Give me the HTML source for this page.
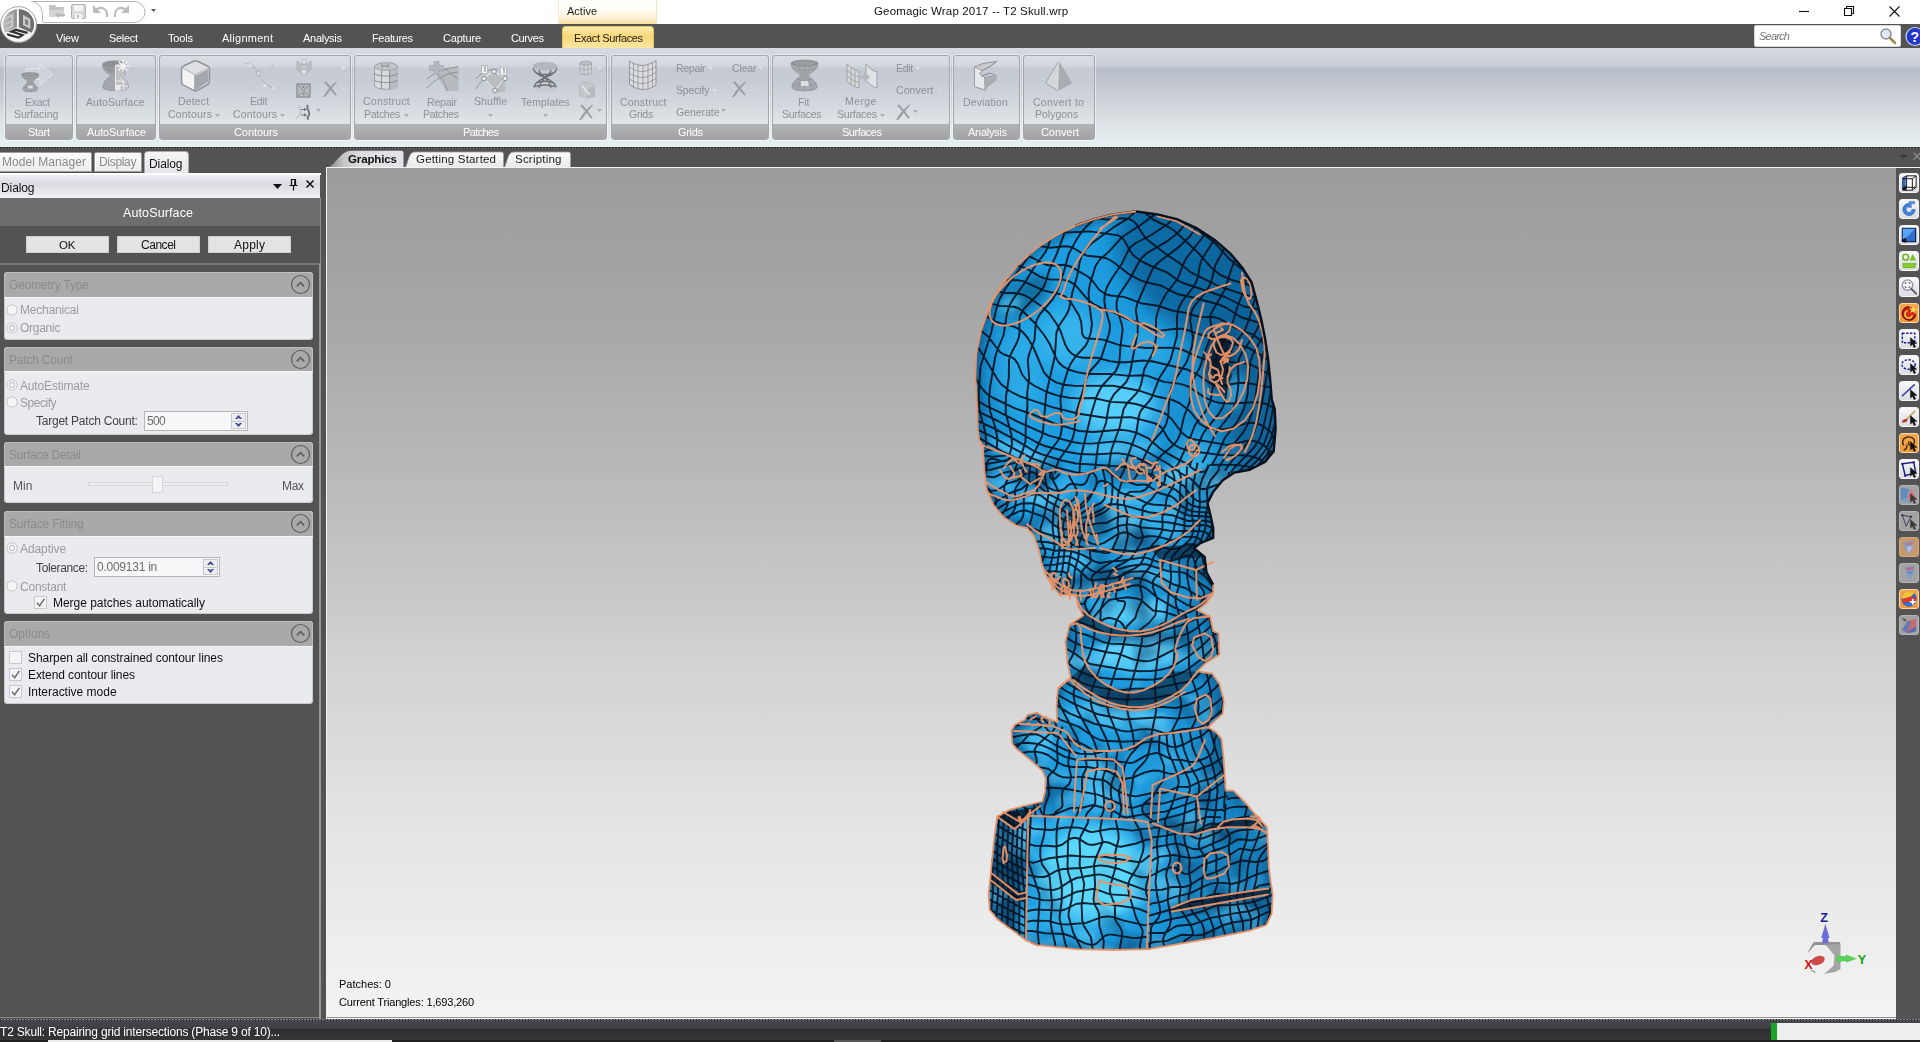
<!DOCTYPE html>
<html>
<head>
<meta charset="utf-8">
<title>Geomagic Wrap 2017 -- T2 Skull.wrp</title>
<style>
*{box-sizing:border-box;margin:0;padding:0}
html,body{width:1920px;height:1042px;overflow:hidden;background:#535353;font-family:"Liberation Sans",sans-serif;font-size:11px;color:#000}
.abs{position:absolute}
.t{position:absolute;white-space:nowrap;will-change:transform}
svg{position:absolute;overflow:visible}

</style>
</head>
<body>
<div class="abs" style="left:0px;top:0px;width:1920px;height:24px;background:#fff"></div>
<div class="abs" style="left:558px;top:0px;width:99px;height:24px;background:linear-gradient(#ffffff,#fffdf6 40%,#fdf1d2 75%,#f9dfa0);border-left:1px solid #f0e9d8;border-right:1px solid #f0e9d8"></div>
<div class="t" style="left:566.5px;top:4px;font-size:11px;line-height:14px;color:#222;letter-spacing:0.01px;">Active</div>
<div class="t" style="left:873.5px;top:4px;font-size:11.5px;line-height:14px;color:#111;letter-spacing:0.16px;">Geomagic Wrap 2017 -- T2 Skull.wrp</div>
<svg style="left:1790px;top:0" width="130" height="24" viewBox="0 0 130 24"><g stroke="#111" stroke-width="1.1" fill="none"><path d="M9 11.5h10"/><path d="M54.5 8.5h7v7h-7z"/><path d="M56.5 8.500v-2h7v7h-2"/><path d="M99.500 6.500l10 10M109.500 6.500l-10 10"/></g></svg>
<div class="abs" style="left:0px;top:24px;width:1920px;height:24px;background:#535353"></div>
<svg style="left:28px;top:0" width="140" height="26" viewBox="0 0 140 26"><path d="M3.700 1.500H106.500a10.500 10.500 0 0 1 0 21H16.500Q14.500 22.500 14.500 20.500V15C14.500 7 9 1.500 3.700 1.500z" fill="#fff" stroke="#b5b5b5" stroke-width="1"/>
<g><path d="M21 5h6l2 2h7v3h-15z" fill="#c4c4c4"/><rect x="21" y="10" width="15" height="7" fill="#d4d4d4"/><path d="M27 15l4-3v2h6v2h-6v2z" fill="#b8b8b8"/></g>
<g><rect x="43.500" y="4.500" width="14" height="14" rx="1.500" fill="#d9d9d9" stroke="#b0b0b0"/><rect x="46" y="5" width="9" height="6" fill="#f4f4f4"/><rect x="47" y="14" width="7" height="5" fill="#f4f4f4"/><rect x="49" y="15" width="2" height="3" fill="#b8b8b8"/></g>
<g fill="none" stroke="#bdbdbd" stroke-width="2.200"><path d="M68 10c5-4 12-2 11 7"/><path d="M98 10c-5-4-12-2-11 7"/></g><path d="M65 5v8h8z" fill="#bdbdbd"/><path d="M101 5v8h-8z" fill="#bdbdbd"/>
<path d="M123 9h5l-2.500 3z" fill="#555"/></svg>
<div class="t" style="left:55.5px;top:31px;font-size:11px;line-height:14px;color:#fff;letter-spacing:-0.23px;">View</div>
<div class="t" style="left:108.5px;top:31px;font-size:11px;line-height:14px;color:#fff;letter-spacing:-0.31px;">Select</div>
<div class="t" style="left:167.5px;top:31px;font-size:11px;line-height:14px;color:#fff;letter-spacing:-0.17px;">Tools</div>
<div class="t" style="left:221.5px;top:31px;font-size:11px;line-height:14px;color:#fff;letter-spacing:0.26px;">Alignment</div>
<div class="t" style="left:302.5px;top:31px;font-size:11px;line-height:14px;color:#fff;letter-spacing:-0.28px;">Analysis</div>
<div class="t" style="left:371.5px;top:31px;font-size:11px;line-height:14px;color:#fff;letter-spacing:-0.35px;">Features</div>
<div class="t" style="left:442.5px;top:31px;font-size:11px;line-height:14px;color:#fff;letter-spacing:-0.19px;">Capture</div>
<div class="t" style="left:510.5px;top:31px;font-size:11px;line-height:14px;color:#fff;letter-spacing:-0.38px;">Curves</div>
<div class="abs" style="left:562px;top:26px;width:92px;height:22px;border-radius:4px 4px 0 0;background:linear-gradient(#fcecb0,#f8d778 45%,#fbe6a2);border:1px solid #eac45e;border-bottom:none"></div>
<div class="t" style="left:573.5px;top:31px;font-size:11px;line-height:14px;color:#222;letter-spacing:-0.38px;">Exact Surfaces</div>
<div class="abs" style="left:1754px;top:25px;width:147px;height:22px;background:#fff;border:1px solid #d8d8d8;border-radius:2px"></div>
<div class="t" style="left:1758.5px;top:29px;font-size:11px;line-height:14px;color:#777;letter-spacing:-0.78px;font-style:italic;">Search</div>
<svg style="left:1878px;top:27px" width="20" height="18" viewBox="0 0 20 18"><circle cx="8" cy="7" r="5" fill="#dfeaf5" stroke="#8a9099" stroke-width="1.500"/><path d="M12 11l5 5" stroke="#a08a4a" stroke-width="2.500" stroke-linecap="round"/></svg>
<svg style="left:1905px;top:27px" width="15" height="20" viewBox="0 0 15 20"><circle cx="10" cy="9.500" r="9" fill="#2338c9" stroke="#cfd6ff" stroke-width="1.200"/><text x="5.500" y="14.500" font-family="Liberation Sans" font-weight="bold" font-size="14" fill="#fff">?</text></svg>
<svg style="left:0;top:5px" width="40" height="40" viewBox="0 0 40 40"><defs><radialGradient id="lg" cx="45%" cy="40%" r="60%"><stop offset="0" stop-color="#ffffff"/><stop offset=".8" stop-color="#ececec"/><stop offset="1" stop-color="#c4c4c4"/></radialGradient><clipPath id="lgc"><circle cx="18.600" cy="19.600" r="15.600"/></clipPath><linearGradient id="lgl" x1="0" y1="0" x2="1" y2="0"><stop offset="0" stop-color="#c9c9c9"/><stop offset="1" stop-color="#8f8f8f"/></linearGradient></defs>
<circle cx="18.600" cy="19.600" r="18" fill="url(#lg)" stroke="#9d9d9d" stroke-width=".9"/>
<g clip-path="url(#lgc)"><path d="M16.900 0V22.200L0 30V0z" fill="url(#lgl)"/><path d="M18.900 0V22.200L40 31V0z" fill="#707070"/><path d="M17.900 24L40 33V40H0V32z" fill="#f6f6f6"/>
<path d="M5 13.800L12.300 10.300V21.300L4.800 24.800M5.500 19.200L12.300 16" fill="none" stroke="#c6c6c6" stroke-width="2.300"/>
<path d="M23 9.800L30.300 14V23.800L23 20.200z" fill="#c9c9c9"/><path d="M25.200 13.800L28 15.400V20.400L25.200 19z" fill="#7c7c7c"/>
<path d="M27.500 27.800L16 24.800L11.500 26.600L22.500 30L18.500 32.600L7 29.300" fill="none" stroke="#333" stroke-width="2.300" stroke-linejoin="miter"/></g>
<circle cx="18.600" cy="19.600" r="16.300" fill="none" stroke="#fff" stroke-width="1.400" opacity=".9"/></svg><div class="abs" style="left:0px;top:48px;width:1920px;height:99px;background:linear-gradient(#d8dae0 0px,#d3d6dc 6px,#c9cdd5 18px,#b9bfca 20.5px,#bcc2cc 28px,#cdd2d8 52px,#dde3e6 76px,#e6f0f3 99px)"></div>
<div class="abs" style="left:0px;top:147px;width:1920px;height:1px;background:repeating-linear-gradient(90deg,#262626 0 2px,#6e6e6e 2px 3px)"></div>
<div class="abs" style="left:4px;top:54px;width:70px;height:87px;border-radius:4px;border:1px solid rgba(255,255,255,.55)"></div><div class="abs" style="left:5px;top:55px;width:68px;height:85px;border:1px solid #a3a5a8;border-radius:3px;background:linear-gradient(rgba(255,255,255,.22),rgba(255,255,255,.10) 40%,rgba(255,255,255,.04));overflow:hidden"><div class="abs" style="left:0;right:0;bottom:0;height:15px;background:linear-gradient(#b2b4b5,#a0a2a3)"></div></div><div class="t" style="left:28.0px;top:125px;font-size:11px;line-height:14px;color:#fff;letter-spacing:-0.31px;">Start</div>
<div class="abs" style="left:75px;top:54px;width:82px;height:87px;border-radius:4px;border:1px solid rgba(255,255,255,.55)"></div><div class="abs" style="left:76px;top:55px;width:80px;height:85px;border:1px solid #a3a5a8;border-radius:3px;background:linear-gradient(rgba(255,255,255,.22),rgba(255,255,255,.10) 40%,rgba(255,255,255,.04));overflow:hidden"><div class="abs" style="left:0;right:0;bottom:0;height:15px;background:linear-gradient(#b2b4b5,#a0a2a3)"></div></div><div class="t" style="left:87.0px;top:125px;font-size:11px;line-height:14px;color:#fff;letter-spacing:-0.16px;">AutoSurface</div>
<div class="abs" style="left:158px;top:54px;width:194px;height:87px;border-radius:4px;border:1px solid rgba(255,255,255,.55)"></div><div class="abs" style="left:159px;top:55px;width:192px;height:85px;border:1px solid #a3a5a8;border-radius:3px;background:linear-gradient(rgba(255,255,255,.22),rgba(255,255,255,.10) 40%,rgba(255,255,255,.04));overflow:hidden"><div class="abs" style="left:0;right:0;bottom:0;height:15px;background:linear-gradient(#b2b4b5,#a0a2a3)"></div></div><div class="t" style="left:233.5px;top:125px;font-size:11px;line-height:14px;color:#fff;letter-spacing:-0.09px;">Contours</div>
<div class="abs" style="left:353px;top:54px;width:255px;height:87px;border-radius:4px;border:1px solid rgba(255,255,255,.55)"></div><div class="abs" style="left:354px;top:55px;width:253px;height:85px;border:1px solid #a3a5a8;border-radius:3px;background:linear-gradient(rgba(255,255,255,.22),rgba(255,255,255,.10) 40%,rgba(255,255,255,.04));overflow:hidden"><div class="abs" style="left:0;right:0;bottom:0;height:15px;background:linear-gradient(#b2b4b5,#a0a2a3)"></div></div><div class="t" style="left:463.0px;top:125px;font-size:11px;line-height:14px;color:#fff;letter-spacing:-0.62px;">Patches</div>
<div class="abs" style="left:610px;top:54px;width:160px;height:87px;border-radius:4px;border:1px solid rgba(255,255,255,.55)"></div><div class="abs" style="left:611px;top:55px;width:158px;height:85px;border:1px solid #a3a5a8;border-radius:3px;background:linear-gradient(rgba(255,255,255,.22),rgba(255,255,255,.10) 40%,rgba(255,255,255,.04));overflow:hidden"><div class="abs" style="left:0;right:0;bottom:0;height:15px;background:linear-gradient(#b2b4b5,#a0a2a3)"></div></div><div class="t" style="left:677.5px;top:125px;font-size:11px;line-height:14px;color:#fff;letter-spacing:-0.33px;">Grids</div>
<div class="abs" style="left:771px;top:54px;width:180px;height:87px;border-radius:4px;border:1px solid rgba(255,255,255,.55)"></div><div class="abs" style="left:772px;top:55px;width:178px;height:85px;border:1px solid #a3a5a8;border-radius:3px;background:linear-gradient(rgba(255,255,255,.22),rgba(255,255,255,.10) 40%,rgba(255,255,255,.04));overflow:hidden"><div class="abs" style="left:0;right:0;bottom:0;height:15px;background:linear-gradient(#b2b4b5,#a0a2a3)"></div></div><div class="t" style="left:841.5px;top:125px;font-size:11px;line-height:14px;color:#fff;letter-spacing:-0.49px;">Surfaces</div>
<div class="abs" style="left:952px;top:54px;width:69px;height:87px;border-radius:4px;border:1px solid rgba(255,255,255,.55)"></div><div class="abs" style="left:953px;top:55px;width:67px;height:85px;border:1px solid #a3a5a8;border-radius:3px;background:linear-gradient(rgba(255,255,255,.22),rgba(255,255,255,.10) 40%,rgba(255,255,255,.04));overflow:hidden"><div class="abs" style="left:0;right:0;bottom:0;height:15px;background:linear-gradient(#b2b4b5,#a0a2a3)"></div></div><div class="t" style="left:967.5px;top:125px;font-size:11px;line-height:14px;color:#fff;letter-spacing:-0.28px;">Analysis</div>
<div class="abs" style="left:1022px;top:54px;width:74px;height:87px;border-radius:4px;border:1px solid rgba(255,255,255,.55)"></div><div class="abs" style="left:1023px;top:55px;width:72px;height:85px;border:1px solid #a3a5a8;border-radius:3px;background:linear-gradient(rgba(255,255,255,.22),rgba(255,255,255,.10) 40%,rgba(255,255,255,.04));overflow:hidden"><div class="abs" style="left:0;right:0;bottom:0;height:15px;background:linear-gradient(#b2b4b5,#a0a2a3)"></div></div><div class="t" style="left:1040.5px;top:125px;font-size:11px;line-height:14px;color:#fff;letter-spacing:-0.08px;">Convert</div>
<div class="t" style="left:25.1px;top:96px;font-size:10.5px;line-height:13px;color:#8d9095;letter-spacing:-0.31px;">Exact</div>
<div class="t" style="left:13.9px;top:108px;font-size:10.5px;line-height:13px;color:#8d9095;letter-spacing:0.00px;">Surfacing</div>
<div class="t" style="left:85.8px;top:96px;font-size:10.5px;line-height:13px;color:#8d9095;letter-spacing:0.09px;">AutoSurface</div>
<div class="t" style="left:178.3px;top:95px;font-size:10.5px;line-height:13px;color:#8d9095;letter-spacing:0.16px;">Detect</div>
<div class="t" style="left:167.5px;top:108px;font-size:10.5px;line-height:13px;color:#8d9095;letter-spacing:0.20px;">Contours</div>
<svg style="left:215px;top:114px" width="6" height="4" viewBox="0 0 6 4"><path d="M0 0h5l-2.500 3z" fill="#a9acb0"/></svg>
<div class="t" style="left:250.1px;top:95px;font-size:10.5px;line-height:13px;color:#8d9095;letter-spacing:-0.24px;">Edit</div>
<div class="t" style="left:232.5px;top:108px;font-size:10.5px;line-height:13px;color:#8d9095;letter-spacing:0.20px;">Contours</div>
<svg style="left:280px;top:114px" width="6" height="4" viewBox="0 0 6 4"><path d="M0 0h5l-2.500 3z" fill="#a9acb0"/></svg>
<div class="t" style="left:362.5px;top:95px;font-size:10.5px;line-height:13px;color:#8d9095;letter-spacing:0.23px;">Construct</div>
<div class="t" style="left:363.9px;top:108px;font-size:10.5px;line-height:13px;color:#8d9095;letter-spacing:-0.29px;">Patches</div>
<svg style="left:404px;top:114px" width="6" height="4" viewBox="0 0 6 4"><path d="M0 0h5l-2.500 3z" fill="#a9acb0"/></svg>
<div class="t" style="left:427.3px;top:96px;font-size:10.5px;line-height:13px;color:#8d9095;letter-spacing:-0.19px;">Repair</div>
<div class="t" style="left:423.3px;top:108px;font-size:10.5px;line-height:13px;color:#8d9095;letter-spacing:-0.32px;">Patches</div>
<div class="t" style="left:473.5px;top:95px;font-size:10.5px;line-height:13px;color:#8d9095;letter-spacing:0.08px;">Shuffle</div>
<svg style="left:488px;top:114px" width="6" height="4" viewBox="0 0 6 4"><path d="M0 0h5l-2.500 3z" fill="#a9acb0"/></svg>
<div class="t" style="left:520.5px;top:96px;font-size:10.5px;line-height:13px;color:#8d9095;letter-spacing:0.09px;">Templates</div>
<svg style="left:543px;top:114px" width="6" height="4" viewBox="0 0 6 4"><path d="M0 0h5l-2.500 3z" fill="#a9acb0"/></svg>
<div class="t" style="left:619.5px;top:96px;font-size:10.5px;line-height:13px;color:#8d9095;letter-spacing:0.20px;">Construct</div>
<div class="t" style="left:629.3px;top:108px;font-size:10.5px;line-height:13px;color:#8d9095;letter-spacing:-0.22px;">Grids</div>
<div class="t" style="left:676.0px;top:62px;font-size:10.5px;line-height:13px;color:#8d9095;letter-spacing:-0.29px;">Repair</div>
<svg style="left:708px;top:67px" width="6" height="4" viewBox="0 0 6 4"><path d="M0 0h5l-2.500 3z" fill="#dfe2e6"/></svg>
<div class="t" style="left:676.0px;top:84px;font-size:10.5px;line-height:13px;color:#8d9095;letter-spacing:-0.16px;">Specify</div>
<svg style="left:712px;top:89px" width="6" height="4" viewBox="0 0 6 4"><path d="M0 0h5l-2.500 3z" fill="#dfe2e6"/></svg>
<div class="t" style="left:676.0px;top:106px;font-size:10.5px;line-height:13px;color:#8d9095;letter-spacing:-0.04px;">Generate</div>
<svg style="left:721px;top:109px" width="6" height="4" viewBox="0 0 6 4"><path d="M0 0h5l-2.500 3z" fill="#a9acb0"/></svg>
<div class="t" style="left:731.5px;top:62px;font-size:10.5px;line-height:13px;color:#8d9095;letter-spacing:-0.14px;">Clear</div>
<svg style="left:758px;top:67px" width="6" height="4" viewBox="0 0 6 4"><path d="M0 0h5l-2.500 3z" fill="#dfe2e6"/></svg>
<svg style="left:750px;top:89px" width="6" height="4" viewBox="0 0 6 4"><path d="M0 0h5l-2.500 3z" fill="#d4d7dc"/></svg>
<div class="t" style="left:797.5px;top:96px;font-size:10.5px;line-height:13px;color:#8d9095;letter-spacing:-0.14px;">Fit</div>
<div class="t" style="left:782.0px;top:108px;font-size:10.5px;line-height:13px;color:#8d9095;letter-spacing:-0.28px;">Surfaces</div>
<div class="t" style="left:845.1px;top:95px;font-size:10.5px;line-height:13px;color:#8d9095;letter-spacing:0.41px;">Merge</div>
<div class="t" style="left:836.5px;top:108px;font-size:10.5px;line-height:13px;color:#8d9095;letter-spacing:-0.21px;">Surfaces</div>
<svg style="left:880px;top:114px" width="6" height="4" viewBox="0 0 6 4"><path d="M0 0h5l-2.500 3z" fill="#a9acb0"/></svg>
<div class="t" style="left:896.1px;top:62px;font-size:10.5px;line-height:13px;color:#8d9095;letter-spacing:-0.31px;">Edit</div>
<svg style="left:915px;top:67px" width="6" height="4" viewBox="0 0 6 4"><path d="M0 0h5l-2.500 3z" fill="#dfe2e6"/></svg>
<div class="t" style="left:896.1px;top:84px;font-size:10.5px;line-height:13px;color:#8d9095;letter-spacing:0.08px;">Convert</div>
<svg style="left:938px;top:88px" width="6" height="4" viewBox="0 0 6 4"><path d="M0 0h5l-2.500 3z" fill="#d4d7dc"/></svg>
<svg style="left:913px;top:110px" width="6" height="4" viewBox="0 0 6 4"><path d="M0 0h5l-2.500 3z" fill="#a9acb0"/></svg>
<div class="t" style="left:963.3px;top:96px;font-size:10.5px;line-height:13px;color:#8d9095;letter-spacing:0.12px;">Deviation</div>
<div class="t" style="left:1032.5px;top:96px;font-size:10.5px;line-height:13px;color:#8d9095;letter-spacing:0.28px;">Convert to</div>
<div class="t" style="left:1035.1px;top:108px;font-size:10.5px;line-height:13px;color:#8d9095;letter-spacing:0.00px;">Polygons</div>
<svg style="left:341px;top:67px" width="6" height="4" viewBox="0 0 6 4"><path d="M0 0h5l-2.500 3z" fill="#dfe2e6"/></svg>
<svg style="left:341px;top:88px" width="6" height="4" viewBox="0 0 6 4"><path d="M0 0h5l-2.500 3z" fill="#d4d7dc"/></svg>
<svg style="left:316px;top:109px" width="6" height="4" viewBox="0 0 6 4"><path d="M0 0h5l-2.500 3z" fill="#a9acb0"/></svg>
<svg style="left:597px;top:67px" width="6" height="4" viewBox="0 0 6 4"><path d="M0 0h5l-2.500 3z" fill="#dfe2e6"/></svg>
<svg style="left:597px;top:109px" width="6" height="4" viewBox="0 0 6 4"><path d="M0 0h5l-2.500 3z" fill="#a9acb0"/></svg><svg style="left:21px;top:62px" width="33" height="31" viewBox="0 0 33 31"><path d="M5 6.500h14V2l12.500 10.500L19 22.500v-5H5z" fill="#cfd3da" stroke="#e6e8ec" stroke-width="1" opacity=".95"/><g transform="translate(1 10.500)"><path d="M0 1.9000000000000001C0 6.84 5.609999999999999 6.5 5.609999999999999 9.5C5.609999999999999 12.5 1 12.540000000000001 1 16.72C1 20 15.5 20 15.5 16.72C15.5 12.540000000000001 10.89 12.5 10.89 9.5C10.89 6.5 16.5 6.84 16.5 1.9000000000000001z" fill="#a6a9ad" stroke="#8d9094" stroke-width=".8"/><ellipse cx="8.25" cy="1.9000000000000001" rx="8.25" ry="1.9000000000000001" fill="#8d9094" stroke="#8d9094" stroke-width=".6"/><ellipse cx="8.25" cy="1.9000000000000001" rx="6.6000000000000005" ry="1.1400000000000001" fill="#a6a9ad" opacity=".6"/><g fill="none" stroke="#8d9094" stroke-width=".7" opacity=".9"><path d="M8.25 3.8000000000000003V19M4.62 3.8000000000000003C4.949999999999999 5.7 6.93 7.5 6.93 9.5C6.93 12.5 4.125 13.299999999999999 4.125 19M11.879999999999999 3.8000000000000003C11.55 5.7 9.57 7.5 9.57 9.5C9.57 12.5 12.375 13.299999999999999 12.375 19"/><path d="M0.99 5.130000000000001Q8.25 7.6000000000000005 15.51 5.130000000000001M3.3000000000000003 11.78Q8.25 13.299999999999999 13.200000000000001 11.78M0.99 14.82Q8.25 16.72 15.51 14.82"/></g><path d="M6.27 12.920000000000002L10.56 12.920000000000002L10.89 15.959999999999999L5.9399999999999995 15.959999999999999z" fill="#f2f2f3" opacity=".75"/></g></svg>
<svg style="left:102px;top:60px" width="28" height="32" viewBox="0 0 28 32"><path d="M0.500 4C0.500 12 8 14 9 15.500C8 17 1 20 1 27.500C1 31.500 26.500 31.500 26.500 27.500C26.500 20 19 17 18.500 15.500C19 14 24.500 12 24.500 4z" fill="#a3a6aa" stroke="#8d9094" stroke-width=".8"/><ellipse cx="12.500" cy="4" rx="12" ry="3.500" fill="#8d9094"/><path d="M1 5C3 11 8 13 12.500 13.500V7.500C8 7.500 3 7 1 5z" fill="#96999d"/><path d="M13.500 4V30.500C20 30.500 26.500 30 26.500 27.500C26.500 20 19 17 18.500 15.500C19 14 24.500 12 24.500 4z" fill="#c3c5c8" opacity=".85"/><g fill="none" stroke="#f0f0f1" stroke-width=".9"><path d="M13.500 5V30.500M18.500 17C21 20 22 26 21.500 30M14 21Q20 20.500 24 22M14 25.500Q21 25 26 26.500"/></g><path d="M14 25.500h4.500v5H14z" fill="#ededee" opacity=".9"/><g stroke="#f4f4f5" stroke-width="1.700" stroke-linecap="round"><path d="M21 0.500V11.500M15.500 6H26.500M17 2L25 10M25 2L17 10"/></g><path d="M21 11c2 1 3 3 1 5" fill="none" stroke="#8d9094" stroke-width=".8"/></svg>
<svg style="left:181px;top:60px" width="29" height="32" viewBox="0 0 29 32"><path d="M12.500 1.200Q14.500 .3 16.500 1.200L26.500 6Q28.500 7 28.500 9.500V21.500Q28.500 23.500 26.500 24.500L16 30.500Q14.500 31.300 13 30.500L2 24.500Q.5 23.500 .5 21.500V9.500Q.5 7 2.500 6z" fill="#dfe0e3" stroke="#909397" stroke-width="1.500"/><path d="M1.500 9L13.500 15.500V30L2 24z" fill="#f3f3f4"/><path d="M14.500 15.500L27.500 9V21.500L14.500 30z" fill="#a4a7ab"/><path d="M2 8L14 14.500L27 8" fill="none" stroke="#b9bbbe" stroke-width="1"/><path d="M14 14.500V30.500" stroke="#909397" stroke-width="1.200"/></svg>
<svg style="left:244px;top:62px" width="32" height="30" viewBox="0 0 32 30"><g fill="none" stroke="#b9bdc3" stroke-width="1.400" stroke-linecap="round"><path d="M2 1.500C10 2 13 8 15 13S22 24 30 26"/><path d="M29 3.500L6 28"/><path d="M27 5.500L5 29" stroke="#c9ccd1"/></g><g fill="#d8dadd" stroke="#b0b4ba" stroke-width="1"><circle cx="14.500" cy="11.500" r="2.300"/></g><g fill="#e6e7ea"><circle cx="6" cy="3.500" r="1.500"/><circle cx="21" cy="23.500" r="1.500"/><circle cx="29.500" cy="26" r="1.300"/></g></svg>
<svg style="left:296px;top:60px" width="16" height="15" viewBox="0 0 16 15"><path d="M1 1l3 3h8l3-3v8l-4 3H5L1 9z" fill="#c3c6ca" stroke="#a2a5a9" stroke-width=".8"/><path d="M6 0h4v4H6zM5 10h6l-1 4H6z" fill="#e6e7e9" stroke="#a2a5a9" stroke-width=".6"/><path d="M4 4v6M12 4v6" stroke="#a2a5a9" stroke-width=".7"/></svg>
<svg style="left:296px;top:83px" width="15" height="15" viewBox="0 0 15 15"><rect x="1" y="1" width="13" height="13" fill="#b7babe" stroke="#8f9296" stroke-width="1.400"/><path d="M1.500 1.500l12 12M13.500 1.500l-12 12" stroke="#8f9296" stroke-width="1"/><path d="M6 3.500h3l-1.500 1.500zM6 11.500h3l-1.500-1.500z" fill="#6d7074"/></svg>
<svg style="left:296px;top:104px" width="17" height="16" viewBox="0 0 17 16"><path d="M4 1C1 4 7 7 4 10S1 14 1 15" fill="none" stroke="#c0c3c7" stroke-width="1.600"/><path d="M12 1C9 4 15 8 13 11S11 14 12.500 15.500" fill="none" stroke="#6f7276" stroke-width="1.800"/><path d="M5 5.500h4M5 11h4" stroke="#6f7276" stroke-width="1"/><path d="M8 3.800l3 1.700-3 1.700zM8 9.300l3 1.700-3 1.700z" fill="#6f7276"/></svg>
<svg style="left:323px;top:63px" width="16" height="12" viewBox="0 0 16 12"><path d="M1 5c2-3 3 3 5 0s2-4 4 0 3 1 5-2M4 5v5" fill="none" stroke="#c3c6cb" stroke-width="1" opacity=".9"/></svg>
<svg style="left:323px;top:81px" width="16" height="16" viewBox="0 0 16 16"><path d="M2.500 1.500C6 5 9 9 12.500 13.500" fill="none" stroke="#9c9fa3" stroke-width="2" stroke-linecap="round"/><path d="M13.500 1C9 4.500 4.500 9 1 15.500C2 15.500 3.500 14 5 11.500C7.500 8 10.500 4.500 13.500 1z" fill="#a4a7ab" stroke="#9c9fa3" stroke-width="1.100"/></svg>
<svg style="left:374px;top:62px" width="24" height="29" viewBox="0 0 24 29"><path d="M.5 4.500V23.500C.5 28.500 23.500 28.500 23.500 23.500V4.500z" fill="#d9dadd" stroke="#9a9da1" stroke-width=".9"/><path d="M16 5V27.500C20 27 23.500 26 23.500 23.500V4.500z" fill="#b9bcc0"/><ellipse cx="12" cy="4.500" rx="11.500" ry="3.800" fill="#c2c4c8" stroke="#9a9da1" stroke-width=".9"/><g fill="none" stroke="#85888c" stroke-width=".9"><path d="M7.500 8V27.500M15.500 8V27.500"/><path d="M.5 11.500C4 15 20 15 23.500 11.500M.5 18C4 21.500 20 21.500 23.500 18"/><path d="M8 2v4M14 1.500v4M8 4h7"/></g></svg>
<svg style="left:427px;top:61px" width="32" height="31" viewBox="0 0 32 31"><path d="M8 11L31.500 5V30H19z" fill="#b4b7bb" opacity=".85"/><path d="M0 18C8 12 16 7 31 6M0 27C8 19 18 12 31 11M8 11C14 16 20 24 20 30M18 7C22 12 28 16 31.500 18" fill="none" stroke="#8c8f93" stroke-width=".9"/><path d="M7 .5h5V4.500h4.500V9.500H12V13H7V9.500H2.500V4.500H7z" fill="#b3b6ba" stroke="#a2a5a9" stroke-width=".7"/></svg>
<svg style="left:476px;top:65px" width="32" height="28" viewBox="0 0 32 28"><path d="M9 13L18 6L29 13V27H18.500z" fill="#b7babe" opacity=".9"/><path d="M0 14C5 8 12 4 22 4M0 24C3 19 6 15 9 13" fill="none" stroke="#8c8f93" stroke-width=".9"/><path d="M8 13L18 6.500L29 13L19 25z" fill="none" stroke="#f1f1f2" stroke-width="1"/><g fill="#e9eaec" stroke="#8c8f93" stroke-width="1"><circle cx="8" cy="13.500" r="2.300"/><circle cx="18" cy="6.500" r="2.300"/><circle cx="29" cy="13.500" r="2.300"/><circle cx="19" cy="25.500" r="2.300"/></g><g fill="#f6f6f7" stroke="#9a9da1" stroke-width=".6"><rect x="5.500" y=".5" width="6" height="8"/><rect x="24.500" y="2" width="6" height="8"/></g><path d="M8 2.500l1-1v5.500M27 4l1-1v5.500" fill="none" stroke="#6f7276" stroke-width=".9"/></svg>
<svg style="left:532px;top:62px" width="26" height="30" viewBox="0 0 26 30"><ellipse cx="13" cy="4" rx="12" ry="3.500" fill="#b4b7bb" stroke="#a2a5a9" stroke-width=".6"/><ellipse cx="13" cy="26" rx="11.500" ry="3.500" fill="#c4c6ca" opacity=".8"/><g fill="none" stroke="#6f7276" stroke-width="1.300"><path d="M1 6C3 13 10 14 12 15S3 19 2 25M25 6C23 13 16 14 14 15S23 19 24 25M7 8C8 13 12 14 13 15S8 19 7 26M19 8C18 13 14 14 13 15S18 19 19 26M2.500 10Q13 15 23.500 10M3 21.500Q13 17 23 21.500M1.500 25Q13 21 24.500 25"/></g></svg>
<svg style="left:579px;top:60px" width="16" height="16" viewBox="0 0 16 16"><path d="M1 3V12.500C1 15.500 12.500 15.500 12.500 12.500V3z" fill="#cfd1d4" stroke="#9fa2a6" stroke-width=".8"/><ellipse cx="6.800" cy="3" rx="5.800" ry="2" fill="#bcbfc3" stroke="#9fa2a6" stroke-width=".8"/><path d="M5 5V15M9 5V15M1 8.500Q7 11 12.500 8.500" fill="none" stroke="#9fa2a6" stroke-width=".7"/></svg>
<svg style="left:579px;top:82px" width="16" height="16" viewBox="0 0 16 16"><path d="M.5 1L8 0L15.500 2.500V14.500L7 16L.5 13z" fill="#c3c5c9" stroke="#aeb1b5" stroke-width=".6"/><path d="M.5 1L7 7L15.500 2.500M7 7V16" fill="none" stroke="#dcdde0" stroke-width="1"/><path d="M7 7L15.500 2.500V14.500L7 16z" fill="#b1b4b8" opacity=".7"/><path d="M3 4l8 9" stroke="#e9eaec" stroke-width="2" opacity=".7"/></svg>
<svg style="left:579px;top:104px" width="16" height="16" viewBox="0 0 16 16"><path d="M2.500 1.500C6 5 9 9 12.500 13.500" fill="none" stroke="#9c9fa3" stroke-width="2" stroke-linecap="round"/><path d="M13.500 1C9 4.500 4.500 9 1 15.500C2 15.500 3.500 14 5 11.500C7.500 8 10.500 4.500 13.500 1z" fill="#a4a7ab" stroke="#9c9fa3" stroke-width="1.100"/></svg>
<svg style="left:629px;top:60px" width="28" height="30" viewBox="0 0 28 30"><path d="M.5 1C5 4.500 10 5.500 14 5.500S23 3 27 .5V25C23 28 18 29.500 14 29.500S5 28 .5 24.500z" fill="#dcdde0" stroke="#8c8f93" stroke-width=".9"/><g fill="none" stroke="#8c8f93" stroke-width=".8"><path d="M4.500 3.500V27M9 5V28.500M14 5.500V29.500M19 5V28.500M23.500 3V27"/><path d="M.5 7C5 10.500 10 11.500 14 11.500S23 9 27 6.500M.5 13C5 16.500 10 17.500 14 17.500S23 15 27 12.500M.5 19C5 22.500 10 23.500 14 23.500S23 21 27 18.500"/></g></svg>
<svg style="left:732px;top:81px" width="16" height="16" viewBox="0 0 16 16"><path d="M2.500 1.500C6 5 9 9 12.500 13.500" fill="none" stroke="#9c9fa3" stroke-width="2" stroke-linecap="round"/><path d="M13.500 1C9 4.500 4.500 9 1 15.500C2 15.500 3.500 14 5 11.500C7.500 8 10.500 4.500 13.500 1z" fill="#a4a7ab" stroke="#9c9fa3" stroke-width="1.100"/></svg>
<svg style="left:791px;top:60px" width="27" height="31" viewBox="0 0 27 31"><path d="M0 3.1C0 11.16 9.18 12.5 9.18 15.5C9.18 18.5 1 20.46 1 27.28C1 32 26 32 26 27.28C26 20.46 17.82 18.5 17.82 15.5C17.82 12.5 27 11.16 27 3.1z" fill="#a6a9ad" stroke="#8d9094" stroke-width=".8"/><ellipse cx="13.5" cy="3.1" rx="13.5" ry="3.1" fill="#8d9094" stroke="#8d9094" stroke-width=".6"/><ellipse cx="13.5" cy="3.1" rx="10.8" ry="1.8599999999999999" fill="#a6a9ad" opacity=".6"/><g fill="none" stroke="#8d9094" stroke-width=".7" opacity=".9"><path d="M13.5 6.2V31M7.56 6.2C8.1 9.299999999999999 11.34 13.5 11.34 15.5C11.34 18.5 6.75 21.7 6.75 31M19.44 6.2C18.9 9.299999999999999 15.66 13.5 15.66 15.5C15.66 18.5 20.25 21.7 20.25 31"/><path d="M1.6199999999999999 8.370000000000001Q13.5 12.4 25.38 8.370000000000001M5.4 19.22Q13.5 21.7 21.6 19.22M1.6199999999999999 24.18Q13.5 27.28 25.38 24.18"/></g><path d="M10.26 21.080000000000002L17.28 21.080000000000002L17.82 26.04L9.719999999999999 26.04z" fill="#f2f2f3" opacity=".75"/></svg>
<svg style="left:846px;top:63px" width="32" height="26" viewBox="0 0 32 26"><path d="M1 1C5 5 9 7 13 8V25C9 24 5 22 1 18z" fill="#d6d8db" stroke="#9a9da1" stroke-width=".9"/><path d="M5 4.500V21.500M9 7V24M1 7C5 11 9 13 13 14M1 12.500C5 16.500 9 18.500 13 19.500" fill="none" stroke="#9a9da1" stroke-width=".8"/><path d="M20 1C23 5 27 8 31 9V25C27 24 23 21 20 17z" fill="#e1e2e5" stroke="#9a9da1" stroke-width=".9"/><path d="M13 12h5V8.500l6 5.500-6 5.500V16h-5z" fill="#b4b7bb" stroke="#c9cbce" stroke-width=".6"/></svg>
<svg style="left:896px;top:104px" width="16" height="16" viewBox="0 0 16 16"><path d="M2.500 1.500C6 5 9 9 12.500 13.500" fill="none" stroke="#9c9fa3" stroke-width="2" stroke-linecap="round"/><path d="M13.500 1C9 4.500 4.500 9 1 15.500C2 15.500 3.500 14 5 11.500C7.500 8 10.500 4.500 13.500 1z" fill="#a4a7ab" stroke="#9c9fa3" stroke-width="1.100"/></svg>
<svg style="left:974px;top:61px" width="23" height="30" viewBox="0 0 23 30"><path d="M.5 6L9 2.500L22.500 .5L16 5.500L8 9.500C5 12 6 14 8 15L16 12L22 14.500V19L13 25.500L11 29L.5 25.500z" fill="#c9cbce" stroke="#8c8f93" stroke-width=".9"/><path d="M.5 6L8 9.500C5 12 6 14 8 15L10.500 16.500L11 29L.5 25.500z" fill="#e7e8ea" stroke="#8c8f93" stroke-width=".7"/><path d="M8 9.500L16 5.500L22.500 .5M8 15L16 12M10.500 16.500L22 14.500M11 29L13 25.500" fill="none" stroke="#8c8f93" stroke-width=".8"/><path d="M10.500 16.500L22 14.500V19L13 25.500L11 29z" fill="#a9acb0"/></svg>
<svg style="left:1045px;top:61px" width="27" height="30" viewBox="0 0 27 30"><path d="M13.500 .5L26.500 22L12.500 29.500L.5 22z" fill="#d3d5d8" stroke="#9a9da1" stroke-width=".9" stroke-linejoin="round"/><path d="M13.500 .5L26.500 22L12.500 29.500z" fill="#a9acb0"/><path d="M13.500 .5L12.500 29.500" stroke="#e9eaec" stroke-width=".8"/></svg><div class="abs" style="left:0px;top:152px;width:92px;height:20px;background:linear-gradient(#fbfbfb,#ececec);border:1px solid #9b9b9b;border-left:none;border-radius:0 2px 0 0;box-shadow:inset -1px 1px 0 #fff"></div>
<div class="abs" style="left:94px;top:152px;width:48px;height:20px;background:linear-gradient(#fbfbfb,#ececec);border:1px solid #9b9b9b;border-radius:2px 2px 0 0;box-shadow:inset 1px 1px 0 #fff"></div>
<div class="abs" style="left:144px;top:151px;width:45px;height:22px;background:linear-gradient(#f6f6f8,#e4e6ea);border:1px solid #aaa;border-bottom:none;border-radius:4px 4px 0 0"></div>
<div class="t" style="left:2.0px;top:155px;font-size:12px;line-height:15px;color:#8a8a8a;letter-spacing:0.05px;">Model Manager</div>
<div class="t" style="left:98.5px;top:155px;font-size:12px;line-height:15px;color:#8a8a8a;letter-spacing:-0.31px;">Display</div>
<div class="t" style="left:149.0px;top:157px;font-size:12px;line-height:15px;color:#111;letter-spacing:-0.10px;">Dialog</div>
<div class="abs" style="left:0px;top:173px;width:321px;height:2px;background:#fdfdfd"></div>
<div class="abs" style="left:0px;top:175px;width:320px;height:23px;background:linear-gradient(#eeeff3,#d9dbe2 40%,#e6e8ec 75%,#f2f3f6)"></div>
<div class="t" style="left:1.0px;top:181px;font-size:12px;line-height:15px;color:#111;letter-spacing:-0.10px;">Dialog</div>
<svg style="left:270px;top:177px" width="50" height="18" viewBox="0 0 50 18"><path d="M3 7h9l-4.500 5z" fill="#111"/><g stroke="#111" stroke-width="1.200" fill="none"><path d="M21.500 2.500h4v6h-4zM19.500 8.500h8M23.500 8.500v5"/><path d="M25 3v5" stroke-width="1.500"/><path d="M36.500 3.500l7 7M43.500 3.500l-7 7" stroke-width="1.500"/></g></svg>
<div class="abs" style="left:0px;top:198px;width:321px;height:28px;background:#6d6d6d"></div>
<div class="t" style="left:123.0px;top:205px;font-size:12.5px;line-height:16px;color:#fff;letter-spacing:0.12px;">AutoSurface</div>
<div class="abs" style="left:26px;top:236px;width:83px;height:17px;background:#e3e3e3;border:1px solid #cfcfcf"></div>
<div class="t" style="left:59.0px;top:238px;font-size:11.5px;line-height:14px;color:#111;letter-spacing:-0.12px;">OK</div>
<div class="abs" style="left:117px;top:236px;width:83px;height:17px;background:#e3e3e3;border:1px solid #cfcfcf"></div>
<div class="t" style="left:140.5px;top:238px;font-size:12px;line-height:15px;color:#111;letter-spacing:-0.47px;">Cancel</div>
<div class="abs" style="left:208px;top:236px;width:83px;height:17px;background:#e3e3e3;border:1px solid #cfcfcf"></div>
<div class="t" style="left:233.5px;top:238px;font-size:12px;line-height:15px;color:#111;letter-spacing:0.25px;">Apply</div>
<div class="abs" style="left:0px;top:263px;width:321px;height:1.5px;background:#787878"></div>
<div class="abs" style="left:320px;top:198px;width:1px;height:66px;background:#8c8c8c"></div>
<div class="abs" style="left:319px;top:264px;width:2px;height:755px;background:#969696"></div>
<div class="abs" style="left:4px;top:271.5px;width:309px;height:68.0px;border-radius:4px;background:#e9ebef;overflow:hidden;box-shadow:0 0 0 1px #c9c9c9 inset"></div><div class="abs" style="left:4px;top:271.5px;width:309px;height:25.0px;border-radius:4px 4px 0 0;background:#a9a9a9;border:1px solid #bdbdbd;border-bottom:none"></div><div class="abs" style="left:4px;top:296.5px;width:309px;height:1px;background:#f6f6f6"></div><div class="t" style="left:9.0px;top:278px;font-size:12px;line-height:15px;color:#8b8b8b;letter-spacing:-0.15px;">Geometry Type</div><svg style="left:290px;top:274.0px" width="21" height="21" viewBox="0 0 21 21"><circle cx="10.500" cy="10.500" r="9" fill="none" stroke="#5e5e5e" stroke-width="1.200"/><path d="M6.800 12.300l3.700-3.700 3.700 3.700" fill="none" stroke="#5e5e5e" stroke-width="1.700"/></svg>
<svg style="left:6px;top:304px" width="12" height="12" viewBox="0 0 12 12"><circle cx="6" cy="6" r="5.200" fill="#f3f4f6" stroke="#c4c6ca" stroke-width="1"/></svg><div class="t" style="left:20.1px;top:303px;font-size:12px;line-height:15px;color:#9a9ca0;letter-spacing:-0.21px;">Mechanical</div>
<svg style="left:6px;top:322px" width="12" height="12" viewBox="0 0 12 12"><circle cx="6" cy="6" r="5.200" fill="#f3f4f6" stroke="#c4c6ca" stroke-width="1"/><circle cx="6" cy="6" r="2.600" fill="none" stroke="#c4c6ca" stroke-width="1.100"/></svg><div class="t" style="left:20.1px;top:321px;font-size:12px;line-height:15px;color:#9a9ca0;letter-spacing:-0.27px;">Organic</div>
<div class="abs" style="left:4px;top:346.5px;width:309px;height:88.0px;border-radius:4px;background:#e9ebef;overflow:hidden;box-shadow:0 0 0 1px #c9c9c9 inset"></div><div class="abs" style="left:4px;top:346.5px;width:309px;height:24.5px;border-radius:4px 4px 0 0;background:#a9a9a9;border:1px solid #bdbdbd;border-bottom:none"></div><div class="abs" style="left:4px;top:371px;width:309px;height:1px;background:#f6f6f6"></div><div class="t" style="left:9.0px;top:353px;font-size:12px;line-height:15px;color:#8b8b8b;letter-spacing:-0.21px;">Patch Count</div><svg style="left:290px;top:349.0px" width="21" height="21" viewBox="0 0 21 21"><circle cx="10.500" cy="10.500" r="9" fill="none" stroke="#5e5e5e" stroke-width="1.200"/><path d="M6.800 12.300l3.700-3.700 3.700 3.700" fill="none" stroke="#5e5e5e" stroke-width="1.700"/></svg>
<svg style="left:6px;top:378.7px" width="12" height="12" viewBox="0 0 12 12"><circle cx="6" cy="6" r="5.200" fill="#f3f4f6" stroke="#c4c6ca" stroke-width="1"/><circle cx="6" cy="6" r="2.600" fill="none" stroke="#c4c6ca" stroke-width="1.100"/></svg><div class="t" style="left:20.1px;top:379px;font-size:12px;line-height:15px;color:#9a9ca0;letter-spacing:-0.16px;">AutoEstimate</div>
<svg style="left:6px;top:396.2px" width="12" height="12" viewBox="0 0 12 12"><circle cx="6" cy="6" r="5.200" fill="#f3f4f6" stroke="#c4c6ca" stroke-width="1"/></svg><div class="t" style="left:20.1px;top:396px;font-size:12px;line-height:15px;color:#9a9ca0;letter-spacing:-0.46px;">Specify</div>
<div class="t" style="left:35.9px;top:414px;font-size:12px;line-height:15px;color:#444;letter-spacing:-0.23px;">Target Patch Count:</div>
<div class="abs" style="left:144px;top:411px;width:104px;height:20px;background:#f6f7f9;border:1px solid #b4b6ba"></div><div class="t" style="left:146.8px;top:414px;font-size:12px;line-height:15px;color:#6e6e6e;letter-spacing:-0.65px;">500</div><div class="abs" style="left:231px;top:413px;width:15px;height:16px;background:#eceef2;border:1px solid #c6c8cc"></div><div class="abs" style="left:231px;top:420.5px;width:15px;height:1px;background:#c6c8cc"></div><svg style="left:231px;top:413px" width="15" height="16" viewBox="0 0 15 16"><path d="M7.500 2l3.500 4h-2.200l-1.300-1.600-1.300 1.600h-2.200z" fill="#3b3f8a"/><path d="M7.500 14l3.500-4h-2.200l-1.300 1.600-1.300-1.600h-2.200z" fill="#3b3f8a"/></svg>
<div class="abs" style="left:4px;top:441.5px;width:309px;height:61.5px;border-radius:4px;background:#e9ebef;overflow:hidden;box-shadow:0 0 0 1px #c9c9c9 inset"></div><div class="abs" style="left:4px;top:441.5px;width:309px;height:24.5px;border-radius:4px 4px 0 0;background:#a9a9a9;border:1px solid #bdbdbd;border-bottom:none"></div><div class="abs" style="left:4px;top:466px;width:309px;height:1px;background:#f6f6f6"></div><div class="t" style="left:9.0px;top:448px;font-size:12px;line-height:15px;color:#8b8b8b;letter-spacing:-0.26px;">Surface Detail</div><svg style="left:290px;top:444.0px" width="21" height="21" viewBox="0 0 21 21"><circle cx="10.500" cy="10.500" r="9" fill="none" stroke="#5e5e5e" stroke-width="1.200"/><path d="M6.800 12.300l3.700-3.700 3.700 3.700" fill="none" stroke="#5e5e5e" stroke-width="1.700"/></svg>
<div class="t" style="left:13.3px;top:479px;font-size:12px;line-height:15px;color:#555;letter-spacing:0.04px;">Min</div>
<div class="t" style="left:281.7px;top:479px;font-size:12px;line-height:15px;color:#555;letter-spacing:-0.34px;">Max</div>
<div class="abs" style="left:88px;top:482px;width:140px;height:4px;background:#eceef0;border:1px solid #d6d8da"></div>
<div class="abs" style="left:152px;top:475.5px;width:11px;height:17px;background:#f3f4f6;border:1px solid #d4d6d9"></div>
<div class="abs" style="left:4px;top:510.5px;width:309px;height:103.0px;border-radius:4px;background:#e9ebef;overflow:hidden;box-shadow:0 0 0 1px #c9c9c9 inset"></div><div class="abs" style="left:4px;top:510.5px;width:309px;height:25.0px;border-radius:4px 4px 0 0;background:#a9a9a9;border:1px solid #bdbdbd;border-bottom:none"></div><div class="abs" style="left:4px;top:535.5px;width:309px;height:1px;background:#f6f6f6"></div><div class="t" style="left:9.0px;top:517px;font-size:12px;line-height:15px;color:#8b8b8b;letter-spacing:-0.19px;">Surface Fitting</div><svg style="left:290px;top:513.0px" width="21" height="21" viewBox="0 0 21 21"><circle cx="10.500" cy="10.500" r="9" fill="none" stroke="#5e5e5e" stroke-width="1.200"/><path d="M6.800 12.300l3.700-3.700 3.700 3.700" fill="none" stroke="#5e5e5e" stroke-width="1.700"/></svg>
<svg style="left:6px;top:542.4px" width="12" height="12" viewBox="0 0 12 12"><circle cx="6" cy="6" r="5.200" fill="#f3f4f6" stroke="#c4c6ca" stroke-width="1"/><circle cx="6" cy="6" r="2.600" fill="none" stroke="#c4c6ca" stroke-width="1.100"/></svg><div class="t" style="left:20.1px;top:542px;font-size:12px;line-height:15px;color:#9a9ca0;letter-spacing:-0.08px;">Adaptive</div>
<div class="t" style="left:35.9px;top:561px;font-size:12px;line-height:15px;color:#444;letter-spacing:-0.36px;">Tolerance:</div>
<div class="abs" style="left:94px;top:557px;width:126px;height:20px;background:#f6f7f9;border:1px solid #b4b6ba"></div><div class="t" style="left:96.5px;top:560px;font-size:12px;line-height:15px;color:#6e6e6e;letter-spacing:-0.25px;">0.009131 in</div><div class="abs" style="left:203px;top:559px;width:15px;height:16px;background:#eceef2;border:1px solid #c6c8cc"></div><div class="abs" style="left:203px;top:566.5px;width:15px;height:1px;background:#c6c8cc"></div><svg style="left:203px;top:559px" width="15" height="16" viewBox="0 0 15 16"><path d="M7.500 2l3.500 4h-2.200l-1.300-1.600-1.300 1.600h-2.200z" fill="#3b3f8a"/><path d="M7.500 14l3.500-4h-2.200l-1.300 1.600-1.300-1.600h-2.200z" fill="#3b3f8a"/></svg>
<svg style="left:6px;top:580.4px" width="12" height="12" viewBox="0 0 12 12"><circle cx="6" cy="6" r="5.200" fill="#f3f4f6" stroke="#c4c6ca" stroke-width="1"/></svg><div class="t" style="left:20.1px;top:580px;font-size:12px;line-height:15px;color:#9a9ca0;letter-spacing:-0.23px;">Constant</div>
<div class="abs" style="left:34px;top:596px;width:13px;height:13px;background:#f4f5f7;border:1px solid #c8c9cc"></div><svg style="left:34px;top:596px" width="13" height="13" viewBox="0 0 13 13"><path d="M3 6.800l2.600 2.900 4.800-6.800" fill="none" stroke="#6d6d6d" stroke-width="1.500"/></svg>
<div class="t" style="left:53.1px;top:596px;font-size:12px;line-height:15px;color:#111;letter-spacing:-0.03px;">Merge patches automatically</div>
<div class="abs" style="left:4px;top:620.5px;width:309px;height:83.0px;border-radius:4px;background:#e9ebef;overflow:hidden;box-shadow:0 0 0 1px #c9c9c9 inset"></div><div class="abs" style="left:4px;top:620.5px;width:309px;height:25.0px;border-radius:4px 4px 0 0;background:#a9a9a9;border:1px solid #bdbdbd;border-bottom:none"></div><div class="abs" style="left:4px;top:645.5px;width:309px;height:1px;background:#f6f6f6"></div><div class="t" style="left:9.0px;top:627px;font-size:12px;line-height:15px;color:#8b8b8b;letter-spacing:0.00px;">Options</div><svg style="left:290px;top:623.0px" width="21" height="21" viewBox="0 0 21 21"><circle cx="10.500" cy="10.500" r="9" fill="none" stroke="#5e5e5e" stroke-width="1.200"/><path d="M6.800 12.300l3.700-3.700 3.700 3.700" fill="none" stroke="#5e5e5e" stroke-width="1.700"/></svg>
<div class="abs" style="left:9px;top:651px;width:13px;height:13px;background:#f4f5f7;border:1px solid #c8c9cc"></div>
<div class="t" style="left:27.9px;top:651px;font-size:12px;line-height:15px;color:#111;letter-spacing:-0.07px;">Sharpen all constrained contour lines</div>
<div class="abs" style="left:9px;top:668px;width:13px;height:13px;background:#f4f5f7;border:1px solid #c8c9cc"></div><svg style="left:9px;top:668px" width="13" height="13" viewBox="0 0 13 13"><path d="M3 6.800l2.600 2.900 4.800-6.800" fill="none" stroke="#6d6d6d" stroke-width="1.500"/></svg>
<div class="t" style="left:27.9px;top:668px;font-size:12px;line-height:15px;color:#111;letter-spacing:-0.09px;">Extend contour lines</div>
<div class="abs" style="left:9px;top:685px;width:13px;height:13px;background:#f4f5f7;border:1px solid #c8c9cc"></div><svg style="left:9px;top:685px" width="13" height="13" viewBox="0 0 13 13"><path d="M3 6.800l2.600 2.900 4.800-6.800" fill="none" stroke="#6d6d6d" stroke-width="1.500"/></svg>
<div class="t" style="left:27.9px;top:685px;font-size:12px;line-height:15px;color:#111;letter-spacing:-0.01px;">Interactive mode</div><svg style="left:326px;top:150px" width="250" height="18" viewBox="0 0 250 18"><defs><linearGradient id="tg" x1="0" y1="0" x2="0" y2="1"><stop offset="0" stop-color="#fbfbfb"/><stop offset="1" stop-color="#e9e9e9"/></linearGradient><linearGradient id="tga" x1="0" y1="0" x2="1" y2="0"><stop offset="0" stop-color="#7c7c7c"/><stop offset=".22" stop-color="#c4c4c4"/><stop offset=".45" stop-color="#dcdde0"/><stop offset="1" stop-color="#e2e4e7"/></linearGradient></defs>
<path d="M0 17.500L3 17C9 14 14 4 21 1.500Q23 .7 25 .7H75.500Q77.500 .7 77.500 2.700V17.500z" fill="url(#tga)"/>
<path d="M79.500 17.500C82 12 83 3.500 87 2.300Q88 2 90 2H175.500Q177.500 2 177.500 4V17.500z" fill="url(#tg)" stroke="#9c9c9c" stroke-width=".8"/>
<path d="M178.500 17.500C181 12 182 3.500 186 2.300Q187 2 189 2H242.500Q244.500 2 244.500 4V17.500z" fill="url(#tg)" stroke="#9c9c9c" stroke-width=".8"/></svg>
<div class="t" style="left:347.8px;top:152px;font-size:11.5px;line-height:14px;color:#111;letter-spacing:-0.12px;font-weight:bold;">Graphics</div>
<div class="t" style="left:415.5px;top:152px;font-size:11.5px;line-height:14px;color:#222;letter-spacing:0.19px;">Getting Started</div>
<div class="t" style="left:515.2px;top:152px;font-size:11.5px;line-height:14px;color:#222;letter-spacing:0.22px;">Scripting</div>
<svg style="left:1897px;top:152px" width="23" height="12" viewBox="0 0 23 12"><path d="M2.700 3h8l-4 3.700z" fill="#3a3a3a"/><path d="M16.500 .8l7 7M23.500 .8l-7 7" stroke="#8c8c8c" stroke-width="1.400"/></svg>
<div class="abs" style="left:326px;top:167px;width:1594px;height:1px;background:#f6f6f6"></div>
<div class="abs" style="left:326px;top:167px;width:1570px;height:852px;background:#f4f4f4"></div>
<div class="abs" style="left:327px;top:168px;width:1569px;height:849px;background:linear-gradient(#9b9b9b 0%,#a9a9a9 20%,#bdbdbd 40%,#d4d4d4 60%,#e6e6e6 80%,#f3f3f3 100%)"></div>
<div class="abs" style="left:327px;top:1017px;width:1569px;height:1px;background:#8e8e8e"></div>
<div class="abs" style="left:0px;top:1017px;width:319px;height:1px;background:#858585"></div>
<div class="t" style="left:338.5px;top:977px;font-size:11px;line-height:14px;color:#000;letter-spacing:0.00px;">Patches: 0</div>
<div class="t" style="left:338.5px;top:995px;font-size:11px;line-height:14px;color:#000;letter-spacing:-0.16px;">Current Triangles: 1,693,260</div>
<div class="abs" style="left:0px;top:1019px;width:1920px;height:1px;background:repeating-linear-gradient(90deg,#1c1c1c 0 1px,#8a8a8a 1px 3px)"></div>
<div class="abs" style="left:0px;top:1020px;width:1920px;height:20px;background:linear-gradient(#46464e 0,#3f3f46 8px,#2e2f31 9.5px,#353636 20px)"></div>
<div class="t" style="left:-0.5px;top:1025px;font-size:12px;line-height:15px;color:#fff;letter-spacing:-0.19px;">T2 Skull: Repairing grid intersections (Phase 9 of 10)...</div>
<div class="abs" style="left:1771px;top:1023px;width:149px;height:17px;background:#efefef"></div>
<div class="abs" style="left:1771px;top:1023px;width:6px;height:17px;background:#18a528"></div>
<div class="abs" style="left:0px;top:1040px;width:1920px;height:2px;background:#202021"></div>
<div class="abs" style="left:48px;top:1040px;width:344px;height:2px;background:#ededed"></div>
<div class="abs" style="left:834px;top:1040px;width:47px;height:2px;background:#565656"></div><svg style="left:965px;top:200px" width="325" height="760" viewBox="0 0 325 760">
<defs><clipPath id="skc"><path d="M171 11.5 192.6 14.4 211.8 19.2 231 27.8 250.2 40.3 265.5 53.7 277 67.2 286.6 82.5 291.4 99.8 296.2 119 300 138.2 302.9 157.4 304.9 176.6 306.8 199.6 309.7 209.2 310.6 228.4 308.7 251.4 300 262 284.7 269.7 269.4 272.5 257.8 280.2 248.2 291.7 242.5 303.2 245.4 314.8 248.2 328.2 248.2 337.8 234.8 343.5 229 348.3 239.6 357 241.5 372.3 248.2 384.8 248.2 393.2 240.8 403.8 232.4 410.1 245 416.5 248.2 431.2 253.5 433.3 254.5 454.5 240.8 462.9 232.4 471.4 247.1 473.5 254.5 484 258.8 500.9 257.7 513.6 242.9 527.3 251.4 532.6 256.6 538.9 258.8 560 259.7 575.4 260.7 590.7 268.4 590.7 279.9 602.2 289.5 613.7 302 627.2 302.9 642.5 303.9 667.5 305.8 682.8 307.7 694.4 306.7 713.6 301 725.1 283.7 730.8 245.3 738.5 206.9 745.2 183.9 749.1 149.4 750 111 749.1 72.6 745.2 61 740.4 45.7 728.9 32.3 719.3 24.6 709.7 23.6 694.4 25.6 675.2 27.5 656 29.4 636.8 32.3 616.6 45.2 609.6 77.4 601.5 80.1 592.1 80.8 578.7 77.4 570.6 65.3 559.9 51.9 549.1 47.2 543.7 46.5 530.3 49.9 524.9 59.9 519.6 62.6 514.9 72 512.8 78.7 516.9 92.2 522.2 91.5 505.1 93 488.2 105.7 477.7 102.5 462.9 100.4 441.8 104.6 424.9 118.3 415.4 113 405.9 111 394.5 95.1 395 86.7 384.8 80.4 374.3 76.6 362.7 73.7 349.3 68.9 335.9 62.2 328.2 50.7 325.3 38.2 316.7 28.6 305.2 21.9 289.8 19 266.8 18 245.7 14.2 239.9 12.7 228.4 12.3 209.2 11.3 190 10.4 176.6 11.3 153.6 16.1 130.5 25.7 103.6 37.2 84.5 52.6 65.3 71.8 48 91 35.5 110.2 25.9 129.4 19.2 148.5 14.4z"/></clipPath>
<linearGradient id="skg" x1="0" y1="0" x2="1" y2="0"><stop offset="0" stop-color="#1583c4"/><stop offset=".15" stop-color="#1d9fe2"/><stop offset=".55" stop-color="#1c9add"/><stop offset="1" stop-color="#147cb8"/></linearGradient>
<filter id="bl" x="-30%" y="-30%" width="160%" height="160%"><feGaussianBlur stdDeviation="9"/></filter>
<linearGradient id="mkg" x1="0" y1="0" x2="0" y2="1"><stop offset="0" stop-color="#000"/><stop offset=".31" stop-color="#000"/><stop offset=".37" stop-color="#fff"/><stop offset="1" stop-color="#fff"/></linearGradient><mask id="mk" maskUnits="userSpaceOnUse" x="0" y="0" width="325" height="760"><rect x="0" y="0" width="325" height="760" fill="url(#mkg)"/></mask>
<filter id="gl" x="0" y="0" width="100%" height="100%" color-interpolation-filters="sRGB"><feTurbulence type="fractalNoise" baseFrequency="0.028 0.034" numOctaves="2" seed="5" result="n"/><feColorMatrix in="n" type="matrix" values="0 0 0 0 0.45  0 0 0 0 0.85  0 0 0 0 1  3.6 0 0 0 -1.75"/></filter>
<filter id="gd" x="0" y="0" width="100%" height="100%" color-interpolation-filters="sRGB"><feTurbulence type="fractalNoise" baseFrequency="0.03 0.026" numOctaves="2" seed="23" result="n"/><feColorMatrix in="n" type="matrix" values="0 0 0 0 0.03  0 0 0 0 0.22  0 0 0 0 0.38  0 3.4 0 0 -1.65"/></filter>
<filter id="bl2" x="-30%" y="-30%" width="160%" height="160%"><feGaussianBlur stdDeviation="4"/></filter></defs>
<path d="M171 11.5 192.6 14.4 211.8 19.2 231 27.8 250.2 40.3 265.5 53.7 277 67.2 286.6 82.5 291.4 99.8 296.2 119 300 138.2 302.9 157.4 304.9 176.6 306.8 199.6 309.7 209.2 310.6 228.4 308.7 251.4 300 262 284.7 269.7 269.4 272.5 257.8 280.2 248.2 291.7 242.5 303.2 245.4 314.8 248.2 328.2 248.2 337.8 234.8 343.5 229 348.3 239.6 357 241.5 372.3 248.2 384.8 248.2 393.2 240.8 403.8 232.4 410.1 245 416.5 248.2 431.2 253.5 433.3 254.5 454.5 240.8 462.9 232.4 471.4 247.1 473.5 254.5 484 258.8 500.9 257.7 513.6 242.9 527.3 251.4 532.6 256.6 538.9 258.8 560 259.7 575.4 260.7 590.7 268.4 590.7 279.9 602.2 289.5 613.7 302 627.2 302.9 642.5 303.9 667.5 305.8 682.8 307.7 694.4 306.7 713.6 301 725.1 283.7 730.8 245.3 738.5 206.9 745.2 183.9 749.1 149.4 750 111 749.1 72.6 745.2 61 740.4 45.7 728.9 32.3 719.3 24.6 709.7 23.6 694.4 25.6 675.2 27.5 656 29.4 636.8 32.3 616.6 45.2 609.6 77.4 601.5 80.1 592.1 80.8 578.7 77.4 570.6 65.3 559.9 51.9 549.1 47.2 543.7 46.5 530.3 49.9 524.9 59.9 519.6 62.6 514.9 72 512.8 78.7 516.9 92.2 522.2 91.5 505.1 93 488.2 105.7 477.7 102.5 462.9 100.4 441.8 104.6 424.9 118.3 415.4 113 405.9 111 394.5 95.1 395 86.7 384.8 80.4 374.3 76.6 362.7 73.7 349.3 68.9 335.9 62.2 328.2 50.7 325.3 38.2 316.7 28.6 305.2 21.9 289.8 19 266.8 18 245.7 14.2 239.9 12.7 228.4 12.3 209.2 11.3 190 10.4 176.6 11.3 153.6 16.1 130.5 25.7 103.6 37.2 84.5 52.6 65.3 71.8 48 91 35.5 110.2 25.9 129.4 19.2 148.5 14.4z" fill="url(#skg)"/>
<g clip-path="url(#skc)"><path d="M171 11.5 192.6 14.4 211.8 19.2 231 27.8 250.2 40.3 265.5 53.7 277 67.2 286.6 82.5 291.4 99.8 296.2 119 300 138.2 302.9 157.4 304.9 176.6 306.8 199.6 309.7 209.2 310.6 228.4 308.7 251.4 300 262 284.7 269.7 269.4 272.5 257.8 280.2 248.2 291.7 242.5 303.2 245.4 314.8 248.2 328.2 248.2 337.8 234.8 343.5 229 348.3 239.6 357 241.5 372.3 248.2 384.8 248.2 393.2 240.8 403.8 232.4 410.1 245 416.5 248.2 431.2 253.5 433.3 254.5 454.5 240.8 462.9 232.4 471.4 247.1 473.5 254.5 484 258.8 500.9 257.7 513.6 242.9 527.3 251.4 532.6 256.6 538.9 258.8 560 259.7 575.4 260.7 590.7 268.4 590.7 279.9 602.2 289.5 613.7 302 627.2 302.9 642.5 303.9 667.5 305.8 682.8 307.7 694.4 306.7 713.6 301 725.1 283.7 730.8 245.3 738.5 206.9 745.2 183.9 749.1 149.4 750 111 749.1 72.6 745.2 61 740.4 45.7 728.9 32.3 719.3 24.6 709.7 23.6 694.4 25.6 675.2 27.5 656 29.4 636.8 32.3 616.6 45.2 609.6 77.4 601.5 80.1 592.1 80.8 578.7 77.4 570.6 65.3 559.9 51.9 549.1 47.2 543.7 46.5 530.3 49.9 524.9 59.9 519.6 62.6 514.9 72 512.8 78.7 516.9 92.2 522.2 91.5 505.1 93 488.2 105.7 477.7 102.5 462.9 100.4 441.8 104.6 424.9 118.3 415.4 113 405.9 111 394.5 95.1 395 86.7 384.8 80.4 374.3 76.6 362.7 73.7 349.3 68.9 335.9 62.2 328.2 50.7 325.3 38.2 316.7 28.6 305.2 21.9 289.8 19 266.8 18 245.7 14.2 239.9 12.7 228.4 12.3 209.2 11.3 190 10.4 176.6 11.3 153.6 16.1 130.5 25.7 103.6 37.2 84.5 52.6 65.3 71.8 48 91 35.5 110.2 25.9 129.4 19.2 148.5 14.4z" fill="none" stroke="#0a3f66" stroke-width="9" opacity=".55" filter="url(#bl2)"/><ellipse cx="230" cy="70" rx="90" ry="58" fill="#0f67a0" opacity="0.95" filter="url(#bl)" transform="rotate(38 230 70)"/><ellipse cx="270" cy="100" rx="40" ry="60" fill="#0e639a" opacity="0.7" filter="url(#bl)" transform="rotate(20 270 100)"/><ellipse cx="285" cy="195" rx="26" ry="75" fill="#0f5c8e" opacity="0.8" filter="url(#bl)" transform="rotate(0 285 195)"/><ellipse cx="150" cy="205" rx="40" ry="32" fill="#56cefa" opacity="1" filter="url(#bl)" transform="rotate(0 150 205)"/><ellipse cx="103" cy="138" rx="32" ry="30" fill="#3dbaf0" opacity="0.8" filter="url(#bl)" transform="rotate(0 103 138)"/><ellipse cx="55" cy="170" rx="25" ry="45" fill="#36b2ea" opacity="0.6" filter="url(#bl)" transform="rotate(0 55 170)"/><ellipse cx="185" cy="150" rx="30" ry="22" fill="#36b2ea" opacity="0.55" filter="url(#bl)" transform="rotate(0 185 150)"/><ellipse cx="60" cy="96" rx="30" ry="14" fill="#0f5d8a" opacity="0.7" filter="url(#bl2)" transform="rotate(-39 60 96)"/><ellipse cx="45" cy="105" rx="12" ry="8" fill="#58cdf8" opacity="0.7" filter="url(#bl2)" transform="rotate(-39 45 105)"/><ellipse cx="254" cy="160" rx="13" ry="30" fill="#07273d" opacity="0.9" filter="url(#bl2)" transform="rotate(8 254 160)"/><ellipse cx="271" cy="192" rx="10" ry="18" fill="#3db9ee" opacity="0.6" filter="url(#bl2)" transform="rotate(10 271 192)"/><ellipse cx="65" cy="276" rx="24" ry="9" fill="#0d4f78" opacity="0.8" filter="url(#bl2)" transform="rotate(18 65 276)"/><ellipse cx="167" cy="270" rx="26" ry="9" fill="#0d4f78" opacity="0.75" filter="url(#bl2)" transform="rotate(-5 167 270)"/><ellipse cx="55" cy="252" rx="35" ry="6" fill="#5fd0fa" opacity="0.8" filter="url(#bl2)" transform="rotate(20 55 252)"/><ellipse cx="155" cy="248" rx="40" ry="7" fill="#55c9f6" opacity="0.7" filter="url(#bl2)" transform="rotate(-4 155 248)"/><ellipse cx="107" cy="325" rx="10" ry="22" fill="#0c486e" opacity="0.8" filter="url(#bl2)" transform="rotate(0 107 325)"/><ellipse cx="75" cy="300" rx="18" ry="8" fill="#5ccefa" opacity="0.75" filter="url(#bl2)" transform="rotate(20 75 300)"/><ellipse cx="230" cy="270" rx="22" ry="34" fill="#3db9ee" opacity="0.7" filter="url(#bl)" transform="rotate(0 230 270)"/><ellipse cx="185" cy="320" rx="34" ry="22" fill="#3fbcf0" opacity="0.65" filter="url(#bl)" transform="rotate(0 185 320)"/><ellipse cx="140" cy="335" rx="24" ry="18" fill="#35aee6" opacity="0.5" filter="url(#bl)" transform="rotate(0 140 335)"/><ellipse cx="145" cy="378" rx="42" ry="10" fill="#0d4c74" opacity="0.75" filter="url(#bl2)" transform="rotate(-5 145 378)"/><ellipse cx="133" cy="322" rx="14" ry="18" fill="#0c4a72" opacity="0.7" filter="url(#bl2)" transform="rotate(20 133 322)"/><ellipse cx="165" cy="340" rx="18" ry="11" fill="#0c4a72" opacity="0.65" filter="url(#bl2)" transform="rotate(-10 165 340)"/><ellipse cx="157" cy="296" rx="26" ry="5" fill="#62d2fb" opacity="0.8" filter="url(#bl2)" transform="rotate(4 157 296)"/><ellipse cx="217" cy="276" rx="16" ry="10" fill="#5ccefa" opacity="0.7" filter="url(#bl2)" transform="rotate(-20 217 276)"/><ellipse cx="111" cy="360" rx="20" ry="8" fill="#58cbf8" opacity="0.7" filter="url(#bl2)" transform="rotate(10 111 360)"/><ellipse cx="200" cy="377" rx="16" ry="8" fill="#4fc6f5" opacity="0.6" filter="url(#bl2)" transform="rotate(0 200 377)"/><ellipse cx="95" cy="385" rx="12" ry="10" fill="#0b3f62" opacity="0.7" filter="url(#bl2)" transform="rotate(0 95 385)"/><ellipse cx="165" cy="412" rx="36" ry="12" fill="#58d0fa" opacity="0.95" filter="url(#bl2)" transform="rotate(0 165 412)"/><ellipse cx="170" cy="455" rx="38" ry="18" fill="#56cef9" opacity="0.95" filter="url(#bl2)" transform="rotate(0 170 455)"/><ellipse cx="170" cy="438" rx="52" ry="5" fill="#0d4c74" opacity="0.6" filter="url(#bl2)" transform="rotate(0 170 438)"/><ellipse cx="170" cy="497" rx="50" ry="6" fill="#0e5078" opacity="0.65" filter="url(#bl2)" transform="rotate(0 170 497)"/><ellipse cx="165" cy="520" rx="40" ry="10" fill="#48c0f2" opacity="0.7" filter="url(#bl2)" transform="rotate(0 165 520)"/><ellipse cx="135" cy="585" rx="18" ry="22" fill="#48c0f2" opacity="0.75" filter="url(#bl2)" transform="rotate(0 135 585)"/><ellipse cx="220" cy="570" rx="22" ry="30" fill="#2ea9e4" opacity="0.5" filter="url(#bl)" transform="rotate(0 220 570)"/><ellipse cx="72" cy="540" rx="16" ry="14" fill="#4dc4f4" opacity="0.7" filter="url(#bl2)" transform="rotate(0 72 540)"/><ellipse cx="43" cy="672" rx="15" ry="58" fill="#0c4a72" opacity="0.9" filter="url(#bl2)" transform="rotate(0 43 672)"/><ellipse cx="127" cy="675" rx="52" ry="48" fill="#5ad8fc" opacity="1" filter="url(#bl)" transform="rotate(0 127 675)"/><ellipse cx="127" cy="675" rx="30" ry="30" fill="#5ad8fc" opacity="0.8" filter="url(#bl)" transform="rotate(0 127 675)"/><ellipse cx="95" cy="720" rx="30" ry="14" fill="#3db9ee" opacity="0.6" filter="url(#bl)" transform="rotate(0 95 720)"/><ellipse cx="250" cy="685" rx="50" ry="42" fill="#147bb4" opacity="0.6" filter="url(#bl)" transform="rotate(0 250 685)"/><ellipse cx="235" cy="630" rx="40" ry="7" fill="#0a3d5e" opacity="0.8" filter="url(#bl2)" transform="rotate(10 235 630)"/><ellipse cx="250" cy="705" rx="48" ry="5" fill="#0b4468" opacity="0.7" filter="url(#bl2)" transform="rotate(-8 250 705)"/><g mask="url(#mk)"><rect x="0" y="0" width="325" height="760" filter="url(#gd)" opacity=".5"/><rect x="0" y="0" width="325" height="760" filter="url(#gl)" opacity=".5"/></g><ellipse cx="125" cy="672" rx="44" ry="40" fill="#5ad8fc" opacity="0.85" filter="url(#bl)" transform="rotate(0 125 672)"/><path d="M32.3 616.6 49.5 629.1 63 617.6 75 606 55 610 38 612z" fill="#05182a" opacity="0.8"/><path d="M222.3 636.8 253 627.2 291.4 627.2 297 626 290 618 260 620 240 628z" fill="#05182a" opacity="0.8"/><path d="M206.9 707.8 226.1 700.1 302.9 688.6 302.9 694.4 206.9 711.6z" fill="#05182a" opacity="0.75"/><path d="M26.5 673.2 53.4 694.4 61 692.4 61 698 51 700 25.5 680z" fill="#05182a" opacity="0.7"/><path d="M104.6 424.9 115.2 422.8 128.9 431.2 150 435.5 171.1 435.5 192.2 431.2 211.2 422.8 223.9 418.6 219.7 412.2 202.8 422.8 181.7 431.2 160.6 431.2 139.5 424.9 118.3 412.2z" fill="#05182a" opacity="0.6"/><path d="M93 488.2 105.7 477.7 118.3 488.2 139.5 500.9 160.6 507.2 181.7 507.2 202.8 498.8 219.7 488.2 232.4 471.4 207 471.4 192.2 484 173.2 492.5 156.4 492.5 135.2 481.9 120.5 465z" fill="#05182a" opacity="0.55"/><path d="M234.8 343.5 229 348.3 239.6 357 195 360 185 348z" fill="#05182a" opacity="0.6"/><path d="M248 150 257 136 265 144 261 160 267 176 259 196 251 184 245 166z" fill="#05182a" opacity="0.75"/></g>
<path d="M21.3 247 20.6 235 19.3 228 15.3 214 14 206.4 13.7 195 15.4 167 26.1 133 31.3 109 34.2 100 40.8 88 66.3 52.9M31.6 251.1 32.3 238 30.7 229 25.1 211 24 200 24.9 188 30.2 157 32 151 38.6 135 41.8 114 44.7 105 48 99.3 59.6 83 69.4 67 80.5 52 83.9 44 85.2 39.3M43.8 255.8 45.6 251 46.9 245 46.5 235 40.7 213 40.9 197 43.8 178 44 160 45.9 154 51.7 143 53.9 137 54.6 132 54.3 121 55 116 58.8 109 74.1 93 78.6 87 80.7 82 84.3 70 91 55.7 100.5 30.7M53.6 259.8 57.9 250 60.5 241 60.9 222 62.4 207 62.2 193 64.2 178 62.8 160 64.1 154 69.5 140 70.6 125 71.7 120 75.1 114 87 100.2 91.5 93 98.5 73 103.7 54 111 40.4 116 32.9 121 27 128.9 19.4M63 264.5 63.6 263 73.7 244 77 236 78.1 230 81.2 194 89.9 156 91.4 133 94 125.7 101.3 115 104 109.1 107.5 92 112.2 76 114.7 62 116.6 56 120.9 49 126 43.8 148 27.7 163 18.6 170.7 11.5M75.9 270.9 78.3 263 81.5 256 92.7 241 95.4 236 96.8 228 95.5 199 97.7 187 102.6 171 105.5 164 110 157.2 120.4 146 123 141 125.7 133 127 124 123.9 101 123.6 92 125 84 130.5 66 134.4 60 144 51.6 157.1 37 175.6 25 190.2 14.1M90 273.5 91.7 266 93.8 260 104.5 245 107.8 238 109.2 232 111.7 211 122 177 125.2 171 133.3 162 136.5 157 144.2 133 145 128.1 144.8 124 140.5 109 139.3 101 139.7 94 142 87 147.1 78 156.7 64 163 51 166 46.7 170.7 43 186.3 35 202.8 24 208.8 18.4M114.2 274.8 115.3 261 116.8 253 126.5 213 131.4 197 134.6 190 137.8 185 150.8 171 154.3 163 155.6 145 157.6 130 156.7 124 151.6 108 151.6 102 153.3 96 165.4 78 173.9 62 177 57.5 183 52.3 202 41.3 213 32.9 220.9 23.3M129.1 271.1 130.2 268 133.3 244 141 223 143.6 207 145.2 201 149.2 194 161 182.2 163.2 178 165.2 172 172.7 132 172.8 123 170.8 110 172.4 103 186.1 72 188.9 67 193.9 62 214 46.9 225.2 36 230.9 27.7M143.4 269.2 146.4 250 154.7 227 158.6 209 162.2 203 171 193.9 174.4 189 176.2 184 179.3 169 188.3 152 191 138 191 119 192.7 112 195.6 104 200.8 94 212.6 79 218.3 64 221.4 58 237.1 38 240 33.6M154.2 278.7 155 278 158.7 271 162.8 256 171.3 233 173.7 217 175 212.5 177.1 209 184 201.4 187 197 194.3 178 203 164.5 205.8 159 211.9 136 212 116 213.7 108 217.3 101 227 88.9 231.2 82 232.9 77 234.9 65 236.9 59 247.8 42 249 39.5M167.3 281.4 168.7 280 172.1 275 179.7 256 184 247.5 189 240.3 197.9 230 201.2 224 203.2 216 204.2 198 206.1 189 210.6 179 221.7 162 227 146 228 137 225.2 121 225.9 113 229 106.7 239.3 94 244 86.8 246.7 80 250.4 65 259.1 49 259.3 48.3M184.7 278 185.5 277 190.5 264 193.2 259 197 254.7 209 244.6 212.4 240 215 234.5 218.9 217 224.9 201 225.3 188 226 184 235 167.1 239.5 153 245.8 137 246.7 130 245.1 119 245.7 114 260.1 89 265 73 270.1 59.1M206.6 271.9 213.1 264 223.1 243 230 225 241 210.8 245.3 202 249.4 178 250.9 163 252.3 156 258 141.5 267.9 122 271.6 109 278.1 92 281.9 75M224.4 265.7 237.9 234 242 228 253.7 214 257.9 207 259.9 201 261.1 193 262.2 181 262.1 165 263.7 156 268.1 146 280 130 284.2 119 290.5 96.4M237.3 262.8 241 256 249.7 235 253.8 229 263.6 217 268 209.6 271 201 272.9 190 273.5 181 272.9 166 274 159 277.2 152 286 139.8 290.6 132 295.5 122 296.3 119.6M246.2 265.8 246.8 265 251.9 256 259.8 238 272.1 222 277.5 212 280.6 203 282.6 194 284.4 168 285.6 161 288.2 154 294 143 299.4 135.1M253.2 268.2 268 245 278 232.7 282 225.8 286.5 214 290 201 294.6 168 297.6 155 301.3 146.7M259.8 270.5 268 259.6 284.3 241 288.5 234 292.2 223 297 203 303.6 164.3M265.7 272.5 269 268.3 289.5 247 295 238.2 298 228.6 303.7 203 306 189.3M273.7 271.7 275 270.3 292 253.5 299 243.8 303.3 232 308.7 206M282.2 270.2 293 259.7 301 249.5 306.3 238 310.3 222.1M292.8 265.6 302 254.3 308 242.1 310 235.3M299.6 262.2 301 260.3 306 251.3 308.8 250.7M230.6 27.6 235.6 32 250 43.2 264 58.7 275.4 68 278.7 70M179.8 12.7 188 19.5 203.5 27 210 31.3 233.3 53 246.6 68 255.4 75 266.9 80 287.6 86M133 18.3 142 19.6 158 18.2 164 18.9 168 20.9 171 23.6 179 36 182.7 40 201 54.1 213 62 226 72.4 253.3 86 279 94.6 290.7 97.4M96.4 32.8 125 31.4 153 35.4 156.2 37 159 39.8 165 50.9 168 54.9 176 61.1 186 66 202 72.4 213 80.3 218 83 259.9 97 279 106.5 293.8 109.2M75 45.9 76 46.2 85 47.8 99 46.2 104 46.5 109 48.3 118 54 122 55.7 137 57.2 142 58.5 148.3 62 163.7 74 175 80.2 181 82.2 195 85.2 213 94.3 227 97.3 255 104.8 261 107.7 276 117.2 294 122.8 297.4 125M62.9 56 67.8 58 81 64.8 87 65.8 99 64.8 106 66.7 123.5 77 127.6 81 134.3 90 141 94.3 146 95.5 159 96.9 176 103.2 193.9 106 207 110.5 221 112.9 233 116.5 238 117.1 248 117 254 118.4 271 128.2 288 134.6 301 144.8M52.4 65.6 57 66.8 63 69.3 74 76.1 80 78.6 86 79.6 98 79.6 105 81.6 111 85.8 122.3 99 130 105 136 107.9 149 112.5 161 118.5 174 122.9 186 128.9 190 130.2 195 130.6 211 128.7 217 128.8 222.4 130 236 134.8 251 137.5 266 143 284 148 303.2 159.9M41 79.8 53 80.3 58 81.1 79 90.6 95 94.2 100 96.3 105.7 102 113.8 115 116.2 122 117.3 134 119 137 121 138.3 138 139.6 153 144.6 162 146.1 182 148 204 147.6 212 148.2 218 150 234 157.4 243 160.3 278 163.1 284 164.2 290 166.7 301.4 173 304.7 174.3M32.9 91.6 38 92.7 52 93.2 59 95 65 98.2 76.2 106 84 113 91.7 124 95.5 131 100 144 103.2 150 107 153.9 112 156.6 118 157.7 132 157.8 145 161.1 153 162.2 161 162.2 177 160.5 187 161.2 223 169.8 232 174.3 245 183.2 250 185.2 257 185.7 273 183 281 182.7 304 187.1 305.8 187.7M26 103.2 28 104.1 35 105.9 49 106.7 53 108 57.6 111 69.7 123 79.8 136 84.7 144 91 157.9 94 162.7 98 166.5 104 169.7 113 172.4 123 174 145 173.9 164 175.9 177 175.2 182 175.6 199 181.9 215 183.9 221 185.6 226 188.2 240 197.6 250 201.9 256 203 265 203.5 289 202.3 297 202.8 302 204.2 306 206.3 309 208.7 309.7 209.6M21.2 116.1 28 120.4 35 123.2 49 126.6 54 129.1 57.7 132 62.8 138 68.6 148 79 172.4 84 178 91 182.4 99 184.7 110 185.9 148 185.8 175 190.8 191 196.3 207.5 200 214 202.8 224.7 211 235 224 241 227.5 249 229.2 259 229.3 265 228.2 281 223.4 286 222.8 291 223.1 298 225.9 305.7 232 308.2 236 309 242.4 309.5 242.2M16 130.8 22.6 136 35 152 39 154.5 47 157.4 50 159.6 52.9 164 57.4 175 62.4 181 69.7 186 81.8 192 92 195.4 104 197.8 112 198.4 128.8 198 146 201.9 163 202.7 171 204 196 211.7 201 214.1 206.6 219 217 233 222 236.8 227 239 262 244.9 270 244 282 240.7 288 240.6 295 243 301 246.9 303.4 250 305 255.2 305.9 254.8M12.5 147.6 15.5 151 32.3 179 36 184 44.6 191 55 196.3 88 207.4 114 213.7 140 217.8 166 217.1 189 223 193.5 225 196.9 228 203.4 239 208 244 214.9 248 223 250.7 257 255.1 276 255.2 284 255.9 291 257.7 296 259.8 299 262.1 299.2 262.4M10.5 178.4 16.5 188 22 194 28.3 198 50 208.4 68 214.5 88 222.9 114.1 231 128 232 155 229.7 163 230.6 171 232.6 183 238.1 194.4 248 201 252.6 219 262.4 225 264.9 226.3 265M244.2 265.1 250 264.8 272 264.9 288.9 267.6M11.8 199.8 14 201.7 21 205.9 34 211.8 52 221.4 84 235.6 107.4 242 116 243.4 127 243.6 150 241.4 157 241.9 165 243.6 176 248.2 203.3 264 211.6 270.2M12.3 210.4 16 212.9 33 221 72 242.5 79 245.7 103 252 115 254 129 254.5 152 253.1 163 254.6 171 257.5 195 268.7 202.3 273.5M12.5 220.6 14 221.5 30 228.8 53 241.3 69 251 77 254.4 97 260.5 111 263.5 152 266.1 163 267.8 189 275.5 191.2 276.7M12.9 229.7 13 229.8 28 237.1 66 257.9 94 268.2 111 272.4 121.5 273.8M157 281.2 157 281.2 164.8 281.9M13.9 237.9 14 237.9 36.6 251 64.9 265 87.6 273.4M18.3 252.6 20 251.2 24 249.8 28 249.8 28.9 250M29.7 306.6 31.6 302 30.5 298 23 289 21.3 285.3M20.1 275.4 22.3 262 24 259.6 26 258.7 29 258.9 37 261.3 40 261.1 43 259.6 45.3 257 45.5 256.5M36.9 315.1 41.6 307 42.7 304 42.6 300 39.2 290 39.4 286 43.3 278 50.7 268 52.9 262 53.1 259.5M42.2 319.4 48.1 312 50.1 308 50.8 302 49.6 291 50.7 288 56 280 59.5 266 59.6 262.8M50.5 325.1 50.5 325 56 320.2 58 316.3 58.7 312 58.8 296 63.8 282 65.1 265.6M65.3 331.7 64.5 326 67.6 314 68.9 303 71.9 292 72.4 287 71.7 268.8M76.7 363 80.3 353 80 349.9 76.1 342 75.5 328 79 317.4 83.7 294 80.6 282 79.8 272.9M82.1 377.1 84.2 371 89.5 348 89.4 342 87.6 328 88.5 311 89.3 306 93.1 297 93.8 293 93 290 88.3 281 87.4 273.4M86.3 384.2 91.7 369 94.9 346 93.1 326 94.3 317 96 311.7 98 308 101 305 109 299.3 112 294 111.4 289 104.6 277 104.1 274.3M91.2 390.2 94.1 383 97.5 369 99.9 347 98.1 328 98.5 322 100 318.3 102 315.6 114.6 306 127.4 293 129.9 289 131.7 283 131.6 278 129.1 274 126.5 272M97.7 394.9 101.8 384 104 363.2 106.2 352 106.3 346 104.4 328 104.8 324 106.5 321 110 318 123 308.9 136 303 139.5 299 140.8 293 140.1 280 137.5 268.2M105.5 394.7 108.7 384 109.8 370 113.5 357 114.1 344 115.2 340 118.7 333 119.2 324 121 321.4 124 319 137 313.5 141.3 311 144.2 308 146 304 147 298 147.6 286 146.7 272M111.5 397.4 111.6 397 116 386 116.2 374 118 369.9 125.5 362 126 359 124.9 354 125.1 351 126 349.9 128 349.4 139 353.1 142 353.1 145 352.1 147.6 349 153 337 153.6 333 152.5 324 153.4 315 152.4 303 153.4 293 156.9 281.2M125.2 416.5 125.1 415 120.8 408 119.9 404 121.5 399 127 394.8 129 392 129.2 388 126.7 379 127.3 376 129.1 374 140.1 366 155 357.3 158 354 159.9 350 162.9 336 161.5 326 162.8 315 158.9 303 160 296.6 162 293.7 165 291.9 176 291.5 180 290 184 285.5 187.9 279 188.1 277.3M135.4 422.8 135.7 409 140.7 395 140.5 384 141.3 380 145.4 373 148.9 369 153 365.9 163.7 360 167 357.2 175.9 343 177.6 339 177.9 336 174.9 326 177.2 318 177.8 307 187 298.8 199.9 281 200.2 276 199.6 274.4M149.9 428.1 150.3 425 151.7 420 158.5 409 160.2 404 160 402.2 159 401.3 153 400.6 150.9 398 151.2 391 155 378 156.8 375 159 373.1 170 368.3 175 364.6 177 361.6 181 352.4 193.4 338 197 331 197.6 326 197.3 317 200.5 308 201.5 299 203.1 295 208 287.3 209.6 281 209.1 276 207.4 271.6M160.1 431 162 426.2 170.3 418 172.6 410 176.9 401 177.3 396 174.7 385 176.6 378 179 374 185.7 366 188.6 357 190.9 353 202 342.8 205 338.8 208.6 330 211.1 318 214.7 308 215.4 304 215 294 215.9 277 213.6 269.5M173.6 431 174.6 430 184 423 190.5 415 192.1 399 187.8 387 188 381 189.7 378 194.2 374 196.3 371 198.6 359 200.3 355 213.2 341 217.4 335 219.4 330 219.5 317 222.2 303 221.1 288 222 266.5M199.3 424 200.3 422 201.6 417 203.7 393 206.2 378 205.4 364 206.3 359 207.9 356 211.3 352 225 339.6 226.9 336 228.2 331 228.6 325 226.8 315 228.2 302 227.7 286 232.6 262.8M214.2 415.1 211.2 405 210.5 400 211.2 395 214.7 384 214.1 361 215.7 357 218.6 353 229 344.2 232 337.5 234.8 326 233.9 314 234.9 304 234.4 293 234.9 287 237.2 279 242.8 268 243.5 264.9M226.5 409 225.1 405 226.6 395 223.8 386 222.3 378 222.8 361 225 355.8 230.8 349.8M234.8 343.5 240 329 240.7 325 240.8 315 242.9 304.8M242.9 302.4 241.9 293 242.6 287 245.7 280 252.4 272 254.5 268.7M235.3 404.8 235.4 404 238.9 396 239.2 393 238.1 390 233 383.4 231 378.5 229.8 371 230.3 363 232.1 359 236.2 354.2M240.8 340.9 241 340 246.7 330 247.1 322.7M263.5 276.4 264 272M248.2 388.3 247.4 386 239.8 376 238.7 372 238.9 367 240.4 363.6M20.6 246.8 24 248.7 26.5 249.1M18.5 255.6 28 256.8 40 255.6 41.8 255.1M224 265.8 230 270.2 236 272.2 240 271.3 242 268.8 243.3 264.8M18.9 263.8 23 263.8 38 261.1 49.2 257.9M211.8 270.1 213.8 272 226 279 236 289 240 289 254.6 284M19.4 269.9 26 269.7 55.9 261M200.1 274.2 218.9 286 227.3 297 232 300.7 236 301.8 240 301.5 244.7 298.8M20.2 276.3 29 277.4 39 272.6 50 270.7 60 265.8 64.6 265.3M85.4 273.3 84.9 276 86 278.4 88 279.4 90 278.7 95 273.8M187.9 277.4 195 282.6 211 290 215 293.4 221.8 302 227 305.4 234 307.3 241 307.7 243.5 307.3M21.6 287 25 290.4 30 290.7 34 289 42 283.6 52 280.7 61 273.3 66 272 69 272.7 72 274.6 79.4 284 84 288 89 290.2 95 290.6 99 289.3 103 285.3 105 284.2 108 283.9 116 285 119 284.3 121.3 282 124.2 275 126.3 272.1M137.5 268.2 141 269.5 148.9 276 154.2 278.8M163.6 282.1 172 285 179 284.4 182 285 194 293 206 296.2 209 298.2 217 306.4 224 310.3 230 311.6 244 312.6 244.8 312.5M28.2 304.3 28.5 304 33.7 300 45 293.1 57 288.6 64 283 66 282.2 70 283.2 84 294.3 98 301.5 107 307.1 111 308.7 115 308.5 118.6 306 125 298.1 132.4 283 134 281.5 137 280.7 141 281.7 145.5 284 156 293 167 296.1 183 303.6 188 304.5 204 305.6 219 313.7 225 315.8 238 316.3 245.9 317.2M31.8 309.1 32 308.9 45 301.2 52 298.4 71 293.8 76 295.6 84 301.9 93.4 307 103.1 314 112 317.4 117 317.9 121 317.2 136.1 310 144 304.2 152 304.2 160 305.6 184 312.2 207 315.2 223 321 240 320.5 247 322.4M35.5 313.4 49.8 306 57 303.5 66 303.3 71 304.5 86.6 311 96 318.2 100 320.4 120 324.9 125 325 132 323.4 142 322.7 153 316.8 160 316 170 316.6 185 320.9 204 322.5 223 326.2 237 325 242 325.6 248.2 328.4M40.2 318.1 54 311.4 59 310.3 62 310.8 81 317.6 89 325.1 94 327.9 99 329 114 330.2 127 334.1 133 333.6 143 330.7 155 325.6 163 324.4 168 324.9 177 327.5 195 329 205 330.7 237 331.2 241 332.4 244 334.8 246.2 338.7M63.3 329.5 67 328.6 70 329.1 78 332.7 94 337.5 108 336.9 114 337.5 126 343.4 131 344.6 135 344.2 139 342.8 153 334.1 159 332.3 164 333.1 170 337.2 173 338.3 183 336.2 188 336.1 195 337.1 207 340.5 218 336.8 229 336.9 234 338.5 237.7 342.3M70.8 341.2 83 342.2 93 344.6 107 344.5 118 347.3 128 351.1 133 351.9 149 349.8 169 351.3 193 345.9 204 348.7 209 349.1 213 348.2 222 344.3 227 344.1 231 346 231.4 346.4M236.6 354.5 239.3 365 240.9 367.3M73.5 348.7 77 348.3 82 348.7 91 350.7 101 350.2 105 350.7 118 355.2 130 361.6 135 363 146 361.2 156 360.8 178 357.4 182 357.9 192 361.6 199 362.1 209 360 222 355.6 225 355.4 227 356.4 228.4 358 231.5 368 235 372.6 246.3 381.3M75.4 356.9 77 356.6 88 357.9 100 356.1 105 356.7 113.4 361 127 370.9 132 372.4 137 372.2 151 369.7 165 366 177 364.2 181 364.3 204 371.4 216 372.1 220 373.1 245 389.9 248.2 392.5M77.5 365.5 90 364.6 100 362.7 103 363.1 106.9 365 116 372 123 379 127 380.5 151 377.9 161.8 373 166 371.9 177 371.3 182 371.6 191 374.8 208 384.2 221 388.2 231 394.9 241 399.5M79.7 372.2 82 371.4 98 371.6 101.3 373 104.2 377 104.8 380 104.4 388 107 394.4 107.2 394.6M113.1 402.2 115 403.7 117 404.3 119.4 403 122.5 396 124.8 393 134.2 387 140 385.1 153 383.9 166 378.5 174 378.3 181 380.3 195 387 210.4 398 222 404.8 230 407.6M122.7 414.9 125 412.6 134.3 397 139 392.4 143 391 153 390.2 167 385.7 173 385.3 177 386.3 181 388.2 192.9 398 208 406.8 219.2 411.9M128 418.2 140 403.9 144 400.3 147 399.4 163 397.3 173 398.8 176 399.9 188 410.5 199 411.9 212.5 416.2M134.7 422.3 136 421.1 140 418.7 144 417.7 150 419.1 155.5 422 158.1 425 160.8 431M193.4 426.3 197 423.4 203.4 422.1M76.6 525.3 74.5 522 67.6 513.8M91.6 525.8 90.2 523 89 521M115.2 549.1 115 547 112.6 539 95.3 506 92.6 499 92.2 497M102.7 464 107.3 456 110 448.1 111.2 441 111.3 434 110.4 427 109.2 421.7M132 551.2 131.4 548 129 541 112.8 511 110.1 504 108.7 497 108.7 492 110 486 124.1 456 127.7 445 129.5 435 129.5 428 128.5 422 126.9 417.5M145.1 551.3 141.4 539 128.1 512 126.3 506 125.6 500 125.9 494 127.4 488 141.8 449 144.8 439 146.3 431 146.5 427.2M156.9 549.9 153.8 538 143.5 513 142.2 507 142 502 143.9 491 157.5 449 161.7 432 161.8 431M169.3 546.1 167.8 534 162.5 512 162.1 503 163.7 493 172.8 461 176.6 443 178.1 431M186.3 535 191.2 511 189.7 481 194.8 441 195.2 425.6M205.7 533.5 214 517 216.3 508 215.6 499 209.7 482 208 472 210.1 443 209 418.5M225.2 530.6 229.9 522 232.5 514 233.6 507 232.6 495 225.7 475 224 466 223.7 443 220.4 414 220.5 411.4M242 527.2 242.9 525 245.6 514 246.6 504 245.7 491 241.3 472.7M239.7 464.1 237.1 444 231.9 418 232.2 406.7M256.5 514.7 257.2 511 258 501 257.8 496.8M252.8 455.5 251.5 446 245.6 423 244.4 416.2M116.8 412.7 117 412.8 120.2 413.4M211 417.2 226 411.6 231 408.6 245.9 396.5M110.3 421 111 421.3 126 425.9 143 434.7 149 435.6 165 435.3 180 436.2 187 435.2 199 430.1 215 425.6 228 420.3 234 416.5 238.1 413M103.9 427.8 106 429.4 112 432.2 124 435.8 139 442.3 145 443.6 157 444 181 446.5 187 445.3 201 438.8 218 435.1 225 432.5 231 428.7 244 417.5 245.1 416.7M101.6 437.1 104 439.3 110 442.8 120 447.2 142 452.2 153 453.6 168 459.4 179 461.3 185 460.9 190 459.4 205 451.6 225 443.1 233 437.8 246 425.9 246.9 425.4M101.1 448.5 110.6 454 120 461.2 125 464 164 470.5 175 471.2 185 471.1 195 469.9 203 468 210 465 225 455.5 235 447.6 248 435.5 252.2 432.8M102.4 462.3 108 467.3 114.1 471 125 475.7 132 477.3 145 478.8 182 479.8 190 479.4 205 477 212 474.9 220.5 471 239 457.2 250.7 445 253.9 442.2M105.4 476.2 108 477.9 120 484 126 485.9 139 488.4 155 490.3 171 488.6 188 488.6 224 481.5 231 477.3 236 471.9M100.4 482.1 109 487.5 117 491.3 139 497.6 161 499.6 185 498.6 203 495.5 218 494.6 226 492.4 233 489.2 238 485.9 247.5 474M94.7 486.8 101.1 491 111 496.1 135 505.3 140 506.4 171 509 180 508.9 194 506.8 211 508 223 505 233 500.5 243 494.5 248.3 490 254.4 483.8M92.4 494.5 93 495 108 503.4 133 514.3 159 519.5 195 517.3 213 518.6 228 516.9 234 514.5 247 506.1 253.7 501 257.8 496.9M91.5 504.7 93 506.1 104 513.1 130 524 143 526.5 155 530.4 160 531.4 165 531.2 175 529.4 182 529.1 189 529.9 198 532.6 202 533.1 217 529.3 233 527.9 237 526.3 241 523.7 258.1 509.2M92 517.3 95 519.6 114 526.9 129 537 135 540 139 540.7 158 541.7 177.6 540.6M61 517.7 66 519 78 518.7 85.1 525.6M106.6 539 120 545.4 128.8 550.8M52.9 614.4 51.3 608.1M61.8 615.5 59.3 606.1M50.9 547.9 51 547.7 57 542.3 64.4 534 77.5 526 78.2 525.4M70.8 616 69.1 604 69.2 603.6M70.6 564.6 72 561 69.6 552 69.8 549 72.4 545 88 530.9 91 526.4 91.2 525.8M78.9 616.3 79.5 607 84.2 594 82.8 578 84.2 575 90 569.6 91.7 566 92.6 559 92 547 92.5 541 97.6 526.7M89 616.6 89.4 614 91 611.6 96.2 608 97.5 606 97 595 97.5 591 99 588.6 104 584.2 105.8 580 105.8 575 103.1 563 105.2 547 102.7 536 103.1 534.2M110.7 617.4 116.5 604 118 597 116.9 585 117 579 118 575 120.9 569 121.7 566 119.6 549.7M120.3 617.8 121.2 615 123.1 612 128.9 606 130.2 603 130.4 598 128.6 583 132.6 566 132.2 562 129.2 551 129.2 550.8M134.7 618.3 137 615.5 139.5 607 137.5 581 138.1 577 141.7 566 141.5 551.7M145.9 618.7 147.8 606 145.8 594 145.9 588 147 582.2 150.8 571 151.4 558 152.7 550.4M154.2 619 154.2 618 156.4 608 153.8 593 154.4 589 157.6 579 159.4 567 161.3 562 165.2 555 175.2 544 176.2 541.6M169.9 619.8 168 616.8 165.2 602 164.9 597 166.7 589 168.5 575 170.8 571 180 561.2 182.6 557 187.3 536 187.7 534.9M188.7 623.3 188.6 623 186 619.4 179 613.7 177.5 611 177.2 608 178 605.1 179.5 603 188.5 596 192.7 588 197.8 581 199 578 199 566 194.6 554 193.9 548 194.5 536 194.9 534.3M201.5 628.6 200.1 624 200.2 620 206.2 607 212.9 587 213.8 582 212.2 574 208.2 563 203.9 554 202.6 549 201.5 535 201.7 533.8M216.8 634.9 220.8 604 224.6 591 225.1 586 223.3 579 212.8 556 210.8 550 208.2 534 208.3 533.3M229.1 634.7 231.5 620 230.9 605 234 593 234.4 587 232.5 579 224.8 565 219.1 550 215.6 534 215.6 532.5M237.6 632 244.5 595 244.8 590 238.4 566 230.6 555 227.3 546 225 533.2 225.3 530.5M246.8 629 248.2 624 250.9 609 252.6 590 249.2 572 245.1 557 243 551.8 238.4 544 236.6 539 234.9 529 234.9 528.6M259.1 608.2 259.4 600 260.6 588.8M260.2 583.8 258 570 253.1 558 244.8 529 244.8 528.5M49 526.3 55 524.7 55.1 524.6M78.9 525.4 83 530.5 90.4 536 97 538.7 106 540.5 108.9 542.1M195 534.3 197 534.5 202 534.2 203.6 533.7M46.9 537.3 60 534.8 71 534.2 76 536.1 90.4 545 101 550.1 115 553.8 127 554.1 137.9 551.9M163.2 549.2 165 549.2 169 547.7 178 542.8 185 541.5 194 541.8 206 546.9 212 546.7 219 544.5 228 539.1 236 536.5 245.2 528.8M48.6 545.3 49 545.1 56 543.1 63 542.7 71 543.7 78 545.6 86 549.2 100 556.9 111 559.8 143 560.2 166 563.1 170 561.9 181 555.3 191 552.9 195 553.9 207 559.6 217 560 225 561.9 230 562 241.2 558 246.8 554 249.1 549 249.7 539 251 536.3 252.9 534.4M56.9 553.1 63 551.7 71 551.6 77.7 553 83 555 94 563.1 100 565.8 107 566.9 123 567 139 570 144.7 572 154 577.6 161 578.7 168 577.5 180 572.4 188 570.5 194 570.7 203 573.4 209 574.1 217 573.5 231 570.5 248 563.9 258.5 556.7M73.2 566.9 83 568.8 93 575.4 98 577.3 104 577.6 117 576.6 127 578.8 138.3 580 142 581.8 149 588.4 154.6 592 164 595.5 171 596.4 186 593.3 201 592.7 213 586.6 222 587 225 586.5 234 581.9 247 578.3 251 575.9 259 568.9 259.3 568.8M80.3 588.8 85 587.5 100 588.8 133 594.6 162.5 607 168 607.9 182 603.5 195 603.7 200 603.1 214 598.6 243 591.7 248 589.4 260 580.5M71.3 603 72.9 604 76.7 613 79 614.9 81 615.4 85 615.3 90.3 614 106 607.9 117 607.8 127 605.3 131 605.8 147 610.3 151 612.3 157 616.5 161 617.5 177 614.6 200 611.6 231 600.9 237 600.3 248 600.5 260 596.2 262.9 596.6M56.7 606.7 59 607 62 609.2 66.2 615.8M184 622.3 186 622.2 216 614.4 231 608.7 237 608.6 249 610.3 258.6 609.8M197.2 626.8 209 626.6 218 623.8 229 622 241 617.1 246 616.7 256.1 617.4M218.5 635.6 232 630.9 242 625 246 623.8 250 623.8 253.8 624.6M26.1 711.5 27.9 692 27.2 659M31.1 717.8 33.1 692 32 652 34.2 615.6M36.6 722.4 38.3 693 36.9 654 39.3 612.8M42.5 726.6 42.4 724 43.6 694 41.8 656 44.3 610.1M48.6 731 48.3 724 49 695 46.7 656 49.1 611.1M54.6 735.6 54.1 725 54.5 696 51.6 657 52.2 636 53.8 612.7M60.6 740.1 59.9 698 57.1 670 56.5 657 57 636 58.5 614.2M62.2 671.4 62.1 670 61.4 657 61.9 637 62.9 622.6M42.4 611.1 62.9 621M33.3 616 45 622.7 62.8 631.2M31.1 624.7 48 634.8 62.6 641.9M29.8 633.9 50 646.5 62.5 652.5M28.8 642.7 49 655.7 62.4 662.1M28 650.9 46.4 663 62.2 670.7M27.2 658.6 44 669.7 62.1 678.7M26.5 666.3 41 675.7 62 686.6M25.7 674 38 681.7 61.9 694.7M24.9 681.7 61.8 702.8M24.1 690.1 61.7 710.8M23.9 699.4 61.6 718.7M24.7 709.8 61.5 726.6M41.7 726.1 50 729.2 61.4 734.6M74.8 745.4 73.7 743 72.6 730 74.6 701 74.3 694 64.5 665 63.4 660 65.9 615.8M90.5 747 89.8 742 86.8 730 85.6 722 87 703 84.6 677 83 672.7 77 664.4 75.2 656 75.4 648 78.6 637 80.1 628 79.9 616.3M102.1 748.2 102 748 100.4 744 94.4 718 96.7 701 96.9 687 91.7 658 91.5 636 92.3 624 93.9 616.8M116.5 749.2 108.4 733 103.5 716 103.7 712 106.6 700 107.3 689 106.7 683 103.4 673 102.5 668 103 642 104.3 633 108.1 621 108.1 617.3M127.8 749.5 125.9 737 118.9 726 117.3 721 116.6 706 119.2 684 114.6 665 115.1 653 114.5 640 116 635.5 122.8 623 123.5 618 123.5 617.9M138.1 749.7 138.8 741 134.3 726 134.1 714 133 710.6 129.3 704 128.5 699 130.1 685 129 665 130.8 658 137.3 643 137.4 640 135.6 634 135.1 630 137.1 618.4M154.9 749.9 155.2 746 157.2 736 157.1 732 155.5 728 150.2 720 149.8 705 145.5 694 144.8 690 145.3 686 150.6 667 151 663 150.2 653 153.6 639 153.4 633 150.7 620 150.9 618.9M175.2 749.3 174.7 746 177.5 734 177.6 730 171.2 718 164 694.2 163 687 163.5 683 165 679 173 666.2 178.1 651 178.7 645 175.3 631 168.7 619.5M184.6 701.6 181.6 695 180.6 690 181.7 683 186 669.4M62.8 626.6 69 628.9 86 630 100 627.5 112 627.4 117 628.4 124 631.5 127 632.1 146 628.8 154 628.9 167 630.6 179 628.9 187.8 628.4M62.6 642.6 66 644.6 70 645.9 82 645.7 91 646.5 97 644.8 105 638.7 110 637.8 114 638.8 122 643.8 125 644.8 129 644.7 140 641.9 144 642.7 151.3 646 156 646.7 171 643.5 182 639.5 187.3 639.6M62.4 659.8 64 661.6 68 662.9 84 658.3 106 655.5 122 656.9 139 656.7 174 662.3 177 661.5 184 656 186.6 655.4M62.2 674.9 72 676.7 78.8 677 83 675.7 91 671 98.1 669 119 667.7 135 665.4 143 666.3 155 669.3 172 676.1 177 677.3 183 677.1 185.7 676.1M62 684.3 65 684.8 79 689.4 88 690.1 94 688.4 105 681.1 111.4 678 130 674.7 135 674.4 141.8 676 179 689.7 184 690.6 185 690.5M61.9 696.4 78 700.1 88 700.4 97 698.6 112 691.7 128 688.9 132 689.6 145 694.4 162 695.4 184 700.5 184.6 700.6M61.7 711.5 66 710.2 71 709.5 96 710.6 100 709.5 111 704 118 703 127 703.9 138 703.5 169 707.9 175 709.3 184.1 713M61.5 721.7 68 720.6 83 720.9 95 724.1 102 724.5 121 722.9 136 717.3 143 716.4 148 717.1 159 720.6 179 725.1 183.5 725.2M61.4 731.1 67 731 80 733.3 99 734 105.2 736 120 743.4 126 744.9 129 744.6 132 743.1 139 736.4 143 734.6 147 734.6 169 738.1 183 736.7M65.9 742.4 66 742.4 73.4 745.3M184.4 749 185.7 740 186 727.9 187.3 725 193.5 718 195.2 713 194.9 708 192.1 695 190.5 682 192.9 661 191.9 643 194.8 625.8M199.6 746.4 198.3 743 198.1 739 199.4 735 204.7 726 206.1 719 202.6 700 203.4 687 201.1 676 201.8 671 205 661.9 205.5 657 204.7 653 202 646 201.5 640 203.1 629.2M218.4 743.2 218.8 742 220.7 740 226.9 736 228 732 225.8 725 216.8 711 214.6 705 214.4 699 215.7 687 212.1 677 211.7 674 214.3 660 214.6 655 210.6 641 210 636 210.7 632.3M239.2 739.6 239.2 730 237.2 724 227.6 712 224 703.5 223.6 697 226 684 224.2 673 224.6 661 223.5 654 219.8 642 219 637 219.2 635.8M248.3 737.9 248.8 732 248.2 727 245.6 720 238.2 706 236.2 696 237.3 679 241.3 668 241.7 661 240 656.4 234.7 649 233.6 645 236.3 633 236.3 632.4M260.1 735.5 259.7 733 254.4 718 252.9 706 249.3 695 249.9 691 252.6 684 252.8 681 251.2 669 251.5 656 247.8 645 249.1 635 247.9 628.6M269.8 733.6 265.4 716 264.3 694 264.8 684 262.4 672 264.7 659 263.8 647 265 638 264 634 260.4 627 259.5 623 260.6 603.6M278.3 731.9 278 724 273.1 707 271.9 696 274.2 681 274.5 670 275.9 657 280.9 642 282.6 633 282.5 627 279.8 617 282.2 606 281.9 604.6M285.6 730.2 286.1 720 285.3 716 279.6 703 278.9 694 281.6 682 282.6 669 284.9 658 292.2 639 297.1 624 297.3 622.2M292.5 727.9 294.2 715 293.5 711 288.2 700 287.8 693 291.3 680 292.3 667 294.1 659 296.2 655 303.1 646.3M301.9 723.4 305 713 304.7 708 302.5 700 302.4 696 303.8 692 306.5 687.2M261.9 599.5 266 598.1 271 597.7 275.6 597.9M187.8 627.5 198 627.6 198.7 627.4M258 611.5 261 609.2 265 607.6 271 606.7 283.7 606.8M187.4 637.5 188 637.3 200 635.9 212.7 633.2M225.7 635.8 232 638.6 237 638.6 254 632.1 266 621.8 272 618.4 278 617.1 291.2 615.5M186.9 648.3 190 647.1 210 643.6 216 644.4 227 648.7 232 649.2 236 648.7 257 639.6 266 633.4 270 631.5 275 630.3 287 629.3 296 625.7 299.6 624.7M186.3 661.4 189.4 659 195 656.6 209 655 224 657.9 232 657.5 238 655.8 250 650.3 260 647 272 639.8 276 639.3 284 640.3 288 640.2 302.5 635.2M185.7 676 197 670 206 667.3 211 668 219 673.6 223 674 226 672.7 237 665.3 264 655.4 274 649 277 648.6 286 650.5 291 650.3 295 648.7 302.9 643.7M185 690.4 186 690.1 197 689.7 207 687 218 687 222 686.3 226 684.5 239 676.1 252 671.6 265 664.5 277 660.5 290 662 297 661.3 301 659.3 303.5 657.1M184.4 704.8 187 703.4 197 701.7 209 697.1 225 693.4 239 686.3 246 683.6 253 682.6 267 683.7 274 682.3 291 674.6 302 671.3 304.2 670M183.9 715.7 205 709.8 221 703.2 235 700.7 244 695.7 248 694.3 253 693.9 266 694.9 283 692.9 287 691 294 685.8 304 684 305.8 683.1M183.6 724.3 194 722.5 204 719.5 217.2 717 239 710.7 252 705.2 266 705.1 286 702.5 302.6 697 307.7 694.6M183.2 733.4 186 732.9 199 733 203 731.3 209.5 727 213 725.7 229 724.2 245 718.1 269 713.4 284 711.2 307.2 703.5M182.7 744.2 189 742 202 740.9 216 734.8 232 735.4 239 734.5 258.8 725 269 722.3 287 719.6 302 712.3 306.8 710.9M297.9 726.1 298 726.1 302.2 722.7" fill="none" stroke="#061322" stroke-width="1.95" stroke-linejoin="round" opacity=".93"/>
<path d="M94.2 68 95.3 70.2 95.9 72.6 96.1 75.3 95.8 78.3 95 81.4 93.9 84.7 92.3 88.2 90.3 91.7 87.9 95.2 85.2 98.7 82.1 102.2 78.8 105.5 75.3 108.7 71.6 111.7 67.7 114.5 63.7 117.1 59.7 119.3 55.7 121.2 51.8 122.8 48 124.1 44.3 124.9 40.8 125.4 37.5 125.4 34.6 125.1 32 124.4 29.7 123.3 27.8 121.8 26.4 120 25.3 117.8 24.7 115.4 24.5 112.7 24.8 109.7 25.6 106.6 26.7 103.3 28.3 99.8 30.3 96.3 32.7 92.8 35.4 89.3 38.5 85.8 41.8 82.5 45.3 79.3 49 76.3 52.9 73.5 56.9 70.9 60.9 68.7 64.9 66.8 68.8 65.2 72.6 63.9 76.3 63.1 79.8 62.6 83.1 62.6 86 62.9 88.6 63.6 90.9 64.7 92.8 66.2 94.2 68M150.5 16.3 146.1 20.2 137.4 28.1 127.3 39.8 115.9 55.5 107.9 68 103.3 77.3 100.4 84.5 99.2 89.6 97.4 93.6 95.2 96.5 99 98.4 109 99.4 119.8 102.2 131.2 107 137.2 111.5 137.8 115.9 136.5 123.5 133.5 134.5 130.8 143.4 128.6 150.2 125.8 159.7 122.6 171.9 120.2 183.4 118.6 194.2 117.1 201.1 115.7 203.9 114.5 208.7 113.5 215.5 109.4 219.1 102.2 219.6 97.6 217.6 95.8 213.2 90.5 212.9 81.8 216.9 76.1 216.1 73.2 210.7 69.6 209.8 65.2 213.2 65.2 216.4 69.6 219.3 76.6 221.9 86.2 224.3 95.8 224.8 105.2 223.3 111.2 222.1 113.8 221.2 115 220.7M137 109.4 141.2 110.3 149.8 112.1 158.8 115.9 168.6 121.9 175.3 124.3 179.1 123.3 185.8 125.7 195.5 131.5 199.3 135.3 197.5 137.1 191.2 134.8 180.6 128.2 175.3 125M171.5 134.4 169.8 138.7 166.5 147.3 168.8 148.7 177 142.9 183.9 141.5 189.7 144.4 190.9 149.2 187.6 156 187.6 156 190.9 149.2 192.6 145.9M265.5 83.5 261.7 84.7 254 87.1 246.4 89.7 238.6 92.6 232.2 96.4 226.9 101.2 223.6 108.4 222.1 118 220.4 127.6 218.5 137.2 216.5 146.3 214.7 155 213 163.6 211.5 172.3 209.6 180.5 207.2 188.1 205 193.9 203.2 197.7 200.4 204.7 196.8 214.9 193 225 189 235 187 240M238.6 103.6 237.6 107.5 235.8 115.1 233.3 125.7 230.5 139.2 228.5 151.2 227.6 161.7 227.6 171.3 228.5 180 230 188.1 231.9 195.8 234.7 204.7 238.2 214.9 242.5 224 247.5 232 250 236M235.5 142.4 229.2 160.7 225.9 178.5 225.4 195.7 228.8 209.7 235.9 220.2 245.3 227.4 256.8 231.2 268.3 228.8 279.8 220.2 288 208.2 292.8 192.9 295 177 294.5 160.7 291.2 147.7 284.9 138.1 277 130.4 267.4 124.7 257.8 123.2 248.2 126.2 242.2 129 239.8 131.9 235.5 142.4M242 157.3 239 170.8 238.3 185.2 239.8 200.5 243.6 211.5 249.9 218.3 257.3 218.3 266 211.5 273.2 202.4 278.9 190.9 282.3 178.9 283.2 166.4 280.8 154.9 275.1 144.4 267.9 137.7 259.2 134.8 252 137.6 246.3 146.3 242 157.3M244 133.5 250 128.5 256.5 125 263.5 123 266 125 264 131 259.5 135.5 252.5 138.5 247 139 243 137 244 133.5M249.5 140.5 254.5 137.5 260 137 266 139 268 143 266 149 262 153 256 155 251.5 152.5 248.5 145.5 249.5 140.5M239 152 241 154.5 245 159.5 246 166 244 174 245 179.5 249 182.5 253 181 257 175 258 169 256 163 257.5 158 262.5 154 265 152M251 184 252.5 187 255.5 193 258.5 198 261.5 202 264 201 266 195 265.5 189 262.5 183 262.5 176.5 265.5 169.5 270 165 276 163 279 162M249 130 250.5 134 253.5 142 256.5 149 259.5 155 264 156.5 270 153.5 274 149 276 143 277 140M245 166 253 170 257 184M234.2 251.3 233.7 253 232.8 254.5 231.4 255.6 229.8 256.1 228.2 256.1 226.6 255.6 225.2 254.5 224.3 253 223.8 251.3 223.8 249.5 224.3 247.8 225.2 246.3 226.6 245.2 228.2 244.7 229.8 244.7 231.4 245.2 232.8 246.3 233.7 247.8 234.2 249.5 234.2 251.3M259 258 261 255 265 249 270 245.5 276 244.5 277.5 246.5 274.5 251.5 270.5 255.5 265.5 258.5 263 260M277 73 278 79.7 279.9 93.1 283.8 103.7 289.5 111.3 293.8 120 296.7 129.6 298.6 138.2 299.5 145.9 299.5 155.4 298.6 166.9 297.4 179.4 296 192.9 294 207.2 291.3 222.4 287.5 235.5 282.5 246.5 280 252M135 28.8 152.3 17.3M192.6 16.3 211.8 21.1 234.8 34.5M277.5 77 282.5 79 285.5 85 286.5 95 285 99 281 97 278 91 276 81 277.5 77M16.1 244.7 20.4 246.4 29.1 249.7 38.2 253.3 47.8 257.2 57.4 261 67 264.9 73.7 268.2 77.6 271.1 82.4 271.6 88.1 269.6 93.9 270.1 99.6 273.1 106.3 274.5 114 274.5 120.7 273.5 126.5 271.6 132.3 269.7 138 267.8 142.8 268.7 146.6 272.6 150.9 276.4 155.7 280.2 161.5 281.6 168.2 280.7 175.4 280.7 183.1 281.6 188.8 280.2 192.7 276.4 198.4 272.9 206.2 269.6 213.8 266.5 221.2 263.5 226.8 259 230.2 253 232 250M20.9 282.1 24 284 30.3 287.9 37.2 291.7 44.9 295.6 51.1 296.5 55.9 294.6 61.7 292.7 68.4 290.8 73.7 285.5 77.6 276.8 79.5 272.5M23.8 293.6 28.6 295.5 38.2 299.4 46.8 300.4 54.5 298.4 61.7 296.1 68.4 293.4 76.6 292.4 86.2 293.2 95.8 292.7 105.4 290.8 114 290.3 121.7 291.2 131.2 293.1 142.8 296.1 153.3 298 162.9 298.9 174.4 297 187.9 292.2 199.7 287.4 209.9 282.4 220 277.5 230 272.5 235 270M96.7 303.3 100.6 299.4 104.4 301.3 108.3 309 109.7 319.5 108.7 333 105.8 340.7 101 342.5 97.6 338.7 95.8 329.2 94.8 319.6 94.8 310 96.7 303.3M119.8 293.6 120.3 298.4 121.2 308 123.6 318.6 127.5 330.1 130.4 337.8 132.2 341.6 133.2 343.5M102 310 104 340M113 300 117 330 123 345M62.2 324.4 64.6 326.3 69.4 330.1 73.7 333 77.6 334.9 82.4 337.3 88.1 340.2 93.4 343.5 98.2 347.4 103 349.3 107.8 349.3 115.2 349 125 348.3 130 348M35 270 36.5 272.5 39.5 277.5 43.5 279 48.5 277 49.5 273.5 46.5 268.5 45 266M55 276 65 284 75 278M151 270 153 268 157 264 161.5 264 166.5 268 171 268 175 264 179 264 183 268 186.5 268 189.5 264 191 262M163 266 165 280M181 266 183 282M226.5 239.8 229.5 243.2 230 246.8 228 250.2 225.5 250.5 222.5 247.5 222 244 224 240 226.5 239.8M257 252 259.5 250 264.5 246 270 244.5 276 245.5 277 248.5 273 253.5 268.5 257 263.5 259 261 260M135 348 142.5 350 157.5 354 172.5 354 187.5 350 201.2 344.8 213.8 338.2 223.8 331.2 231.2 323.8 235 320M140 305 148.8 308.8 166.2 316.2 182.5 317.5 197.5 312.5 211.5 305 224.5 295 231 290M79.5 370.4 83.4 374 91.1 381.4 99 386.8 107 390.2 117 391 129 389 143.2 385.5 159.5 380.5 167.7 378M83 378 86 381 92 387 99.5 391.8 108.5 395.2 118.5 396 129.5 394 142.5 390.8 157.5 386.2 165 384M89 380 87 390M97 386 96 396M105 389 105 399M115 390 116 400M125 389 127 398M135 387 138 396M147 384 150 392M157 381 161 389M195 360 231 370 248 362M231 370 232 400M195 360 195.5 367.5 196.5 382.5 205.8 392.5 223.2 397.5 236 398.2 244 394.8 248 393M112 399.6 113.6 402.8 116.7 409.1 123.6 415.4 134.2 421.7 144.8 426.5 155.3 429.6 165.9 431.2 176.4 431.2 187 429.1 197.5 424.9 207 420.1 215.5 414.9 223.4 410.6 230.8 407.5 237.9 402.7 244.8 396.4 248.2 393.2M104.6 424.9 107.2 424.4 112.6 423.3 115.5 428.1 116 438.6 117.3 449.2 119.4 459.7 124.2 469.2 131.5 477.7 140.5 484.5 151.1 489.9 160.6 492.5 169 492.5 178 490.4 187.5 486.1 195.9 480.9 203.3 474.5 208.6 467.2 211.8 458.7 212.3 453.4 210.2 451.3 210.7 446 213.9 437.5 217.6 429.6 221.8 422.3 229.2 418.1 239.7 417 245 416.5M116.2 424.9 119.4 426.5 125.7 429.6 134.2 432.3 144.7 434.4 155.3 435.5 165.8 435.5 176.4 434.4 186.9 432.3 197 429.1 206.5 424.9 214.4 421.8 220.7 419.7 223.9 418.6M93 488.2 96.2 485.6 102.5 480.3 108.9 480.3 115.1 485.6 123.6 491.4 134.2 497.7 144.8 502.5 155.3 505.6 165.9 507.2 176.4 507.2 187 505.1 197.5 500.9 207 496.1 215.5 490.9 222.9 484 229.2 475.6 232.4 471.4M107 482 111.5 486 120.5 494 131.2 500.5 143.8 505.5 156.2 508.8 168.8 510.2 181.2 509.2 193.8 505.8 205 501 215 495 220 492M232.3 498.8 240.8 494.6 245.5 498.8 246.6 511.5 243.9 519.9 237.7 524.1 232.9 519.9 229.7 507.2 232.3 498.8M229.2 437.6 239.7 433.3 246.1 437 248.2 448.7 246.1 456.6 239.8 460.8 233.4 457.1 227.1 445.5 229.2 437.6M55 524.1 65.5 524.6 86.7 525.7 101.4 532 109.9 543.7 120.4 550 133.2 551.1 145.8 551.1 158.5 550 170.1 545.8 180.6 538.4 192.8 534.2 206.5 533.1 220.8 531.3 235.5 528.6 242.9 527.3M49 531 93 533 111 556M112 560 115.2 559.5 121.5 558.4 132.6 558.4 148.5 559.5 157.5 567.4 159.5 582.2 161.1 595.6 162.2 607.7 162.8 613.7M112 560 109.9 589.6 109 611.8M122.5 571.5 126.3 570.5 134 568.7 142.6 569.1 152.2 572 157.5 583.5 158.5 603.6 159 613.7M122.5 571.5 114.8 611.8M149.8 606.7 149.3 608.2 148.4 609.4 147.2 610.3 145.8 610.8 144.2 610.8 142.8 610.3 141.6 609.4 140.7 608.2 140.2 606.7 140.2 605.3 140.7 603.8 141.6 602.6 142.8 601.7 144.2 601.2 145.8 601.2 147.2 601.7 148.4 602.6 149.3 603.8 149.8 605.3 149.8 606.7M187.7 585 197.3 580.7 216.5 572 227.5 565.8 230.5 561.9 233.9 555 238 545 240 540M187.7 585 185.8 617.6M195.4 588.8 231.9 596.5 258.8 575.4M231.9 596.5 235.7 623.3M195 590 193 622M63 615.7 89.4 616.7 142.1 618.5 173.3 620.5 182.9 622.3 186.8 641.1 184.9 676.6 183.4 707.8 182.5 734.7 182 748.1M63 615.7 61 740.4M187.7 623.3 196.4 626.7 213.6 633.4 230 634.4 245.3 629.6 262.6 627.2 281.8 627.2 294.1 628.7 299.3 631.5 302 633M253 627.2 254.8 625.4 258.2 621.8 267.5 619.5 282.5 618.5 291.8 620 295.2 624 297 626M206.9 707.8 226.1 700.1 302.9 688.6M206.9 711.6 302.9 694.4M245.3 653.3 256.8 651.9 263.1 656.2 264 666.3 259.2 673.5 248.7 677.8 242.2 678.8 239.8 676.4 238.8 669.9 239.3 659.3 245.3 653.3M216.3 668.8 215.9 670.4 215.1 671.7 214 672.7 212.7 673.2 211.3 673.2 210 672.7 208.9 671.7 208.1 670.4 207.7 668.8 207.7 667.2 208.1 665.6 208.9 664.3 210 663.3 211.3 662.8 212.7 662.8 214 663.3 215.1 664.3 215.9 665.6 216.3 667.2 216.3 668.8M142.6 654.5 159.9 655.5 165.6 657.9 159.9 661.7 151.2 663.1 139.8 662.2 134 659.8 134 655.9 142.6 654.5M135 680 136.8 681.8 145 683.8 159.4 685.7 166.1 690.5 165.2 698.2 156.1 703 138.8 704.9 131.2 699.2 133 685.7 135 680M32.3 616.6 49.5 629.1 63 617.6M38 612 55 622 75 606M26.5 673.2 53.4 694.4 61 692.4M25.5 680 51 700 61 698M40 646.5 42 655.5 41.5 661 38.5 663 37.5 658.5 38.5 647.5 40 646.5M71 516 65 520M91 375.4 90.9 374.8 90.8 373.6 89.6 373.1 87.2 373.4 86 374.7 86 377.2 86 378.4M87.2 385 86.9 384.1 86.3 382.5 86 381 86 379.6 87.1 379.7 89.2 381.3 90.3 382.1M102.9 391.4 99.6 389.3 103.3 393.9M103.8 381.6 103.4 381.3 102.6 380.7 101.6 379.8 100.3 378.5 99.1 379 98 381.3 98.3 383.5 99.9 385.7 100.7 386.8M103.6 373.2 103.8 374.1 104.2 376 105 377 106.3 377.1 106.8 377.3 106.4 377.8 106.1 378.1M95.1 376.7 94.5 377.5 93.2 378.9 91.6 379.6 89.5 379.4 89.7 379.4 92.2 379.5 93.4 379.5M99.6 389.1 104.6 386.1 103.7 383.1M136.4 384.7 136.4 386.3 136.2 389.6 136.3 392.3 136.7 394.4 136.6 395.8 136.1 396.6 135.8 397M138.4 384.7 138.6 385.8 138.9 388 138.9 390.2 138.3 392.2 138 394 137.9 395.6 138.1 396.6 138.7 396.9 139 397M144.8 392.5 144.1 393.6 142.7 395.9 142.6 397 144 397 144.6 397 144.3 397 144.2 397M136.1 393.9 136.3 394.7 136.7 396.2 136.5 397 135.9 397 135.7 397 136 397 136.2 397M134.9 386.2 134.4 388.1 133.4 392 132.7 394.7 132.3 396.2 131.5 397 130.3 397 129.7 397M131 383.5 128.4 391 129 397M158.3 377.3 157.6 378.8 156.1 381.8 154.2 383.3 151.9 383.5 151.6 383.3 153.2 382.8 155.5 382.5 158.4 382.3 159.9 382.3M152.1 375 148.7 374.3 150.5 373.4M151.7 371.2 148.7 368.1 148 368M110.3 296.9 112.6 302.5 110.3 310M112.2 325.6 112.4 327.3 112.8 330.8 112.4 333.7 111.2 336 111.1 339.2 112.2 343.1 112.9 345 113 345 113 345M105.8 333.8 105.5 335.4 105 338.5 104.3 341.3 103.4 343.8 103.4 345 104.3 345 104.6 345 104.3 345 104.1 345M110 304.7 110.3 305.5 110.8 307.2 111.5 309 112.5 311.1 113 314.1 113 318.3 112.3 321.5 111 323.7 110.4 324.7M105.3 320.9 105.2 322.4 104.9 325.5 105.2 328.2 106.1 330.5 106 333.7 105 337.6 104.1 340.9 103.4 343.6 103 345M108.2 310.3 108.5 320.4 106.7 328.7M98.9 338.9 99.6 340.5 100.8 343.5 100.8 345 99.5 345 98.3 345 97.2 345 96.6 345M97.4 332.4 96.6 341.5 96.7 344.6M109.6 335.3 112.4 342 110.6 345M123.6 334.1 123 335.1 121.8 337 121.4 339.5 121.7 342.5 121.9 344 122 344 122 344M131.6 334.8 132.4 344 133.2 344M125.1 307.8 124.6 310.3 123.6 315.3 122.7 318.9 121.7 321 121.2 323.5 121.2 326.3 121.2 330.3 121.4 335.4 121.4 338M129.1 303.2 128.5 304.2 127.4 306.1 127.2 309.1 128.1 313 128.6 316.7 128.6 320.3 128.7 322.1M56.3 262.6 60 269.4 61.8 271.9M64.6 263.1 65.6 263.4 67.6 263.9 70.1 264.1 73.1 264.2 74.5 264.6 74 265.4 73.8 265.8M55.5 261.5 55 262.1 54 263.2 52.2 262.4 49.7 259.4 47.1 259.1 44.7 261.2 42.3 263.7 40.1 266.5 39 267.9M54.6 270 55.2 271.3 56.5 274 55.6 275.9 52.6 276.9 52.6 276.8 55.4 275.6 56.8 275M54.6 259.5 56.1 259.9 59.6 255M54.1 276.1 49.3 277.3 49.2 278.3M78.4 274.8 73.8 274.5 79.2 270.6M183.1 276.5 182.7 276.8 182.1 277.5 183.1 278.6 185.9 280 186.6 279.8 185.3 277.9 184 277.4 182.8 278.3 182.2 278.7M194.8 283.2 194.8 283.9 194.9 285.3 194.2 285.8 192.9 285.4 192.6 284.3 193.2 282.5 193.5 281.7M189.3 270.8 189.7 270.4 190.5 269.4 191.9 269.4 194 270.2 193.8 269.2 191.4 266.1 191.4 266.3 193.8 269.7 195 271.4M190.5 274.9 191.6 275.8 193.9 277.6 194.9 279 194.8 280 194.7 280.8 194.5 281.5 194.4 281.9M142.7 283.9 139.9 286 139 286M177.1 273.3 176.3 273.4 174.6 273.6 172.6 272.2 170.2 269.4 167.4 267.4 164.1 266.1 161.1 263.9 158.5 260.8 157.1 259.3M194.6 266.1 194.7 266.9 194.9 268.5 195 270.9 195 274.1 195 276.4 195 278 195 279.4 195 280.8 195 281.5M179.5 273.5 179.2 272.5 178.6 270.5 177.6 269.5 176.2 269.6 175 268.4 174.2 266 175.1 264.9 177.8 265 179.2 265.1M169.1 266.5 168.5 266.1 167.3 265.3 166.4 263.2 165.9 259.9 166.9 258.2 169.6 258.1 170.9 258M192.8 262.3 187.4 263.8 180.6 260M243.2 189 243.2 190.2 243.1 192.5 244.7 193.9 248.2 194.6 251.4 195 254.4 195 255.4 195 254.6 195 254.2 195M264.7 167.3 264.3 173 262.3 179M264.6 155.7 263 156.2 259.8 157.1 257.3 158.8 255.6 161.3 255.3 161.9 256.4 160.5 258.4 160.3 261.1 161.2 262.5 161.6M251.8 183.9 257.3 189.3 259.5 192M258.7 163.3 260.2 162.2 263.2 159.9 263.1 158.9 259.9 159 259.5 159.8 261.8 161.3 262.9 162M244 173.3 245 174.7 247 177.6 248.6 177.7 250 175 252.4 174.8 255.7 177.1 257.4 178.2M256.2 128.1 258 129.8 251.2 133M243.9 160 243 156.5 246.3 154.3M84.4 524 84.6 522.8 84.9 520.5 84.8 520.5 84.3 522.9 84.3 524.6 84.8 525.5 84.5 526 83.5 526 83 526M78.2 521.9 77.8 521.2 76.9 519.7 76.4 518.9 76.3 518.5 77.4 518 79.8 517.1 81 516.7M82.1 525.3 81.6 525.5 80.7 525.8 79.7 526 78.5 526 76.7 525.4 74.3 524.2 73.1 523.6M62.2 524.8 63.3 522.9 67.7 525.8M53.6 618.4 54.1 619.3 55.1 621.1 55.6 620.8 55.6 618.5 55.1 617.2 54.2 617 53.7 616.8M64.7 612 64.9 610 65 610M61.1 617 65 611.9 65 610M285.7 616.4 287.9 616 289 617.6M286.4 626.8 287.9 625.8 290.8 623.7 293 621.4 294.6 618.7 294 617 291.3 616.3 290 616M294.6 629 295.2 629.3 296.4 629.8 297 630 297 630 295.8 629.1 293.4 627.3 291.2 626.3 289 626.2 287.9 626.1" fill="none" stroke="#ec9266" stroke-width="2.0" stroke-linejoin="round" stroke-linecap="round" opacity=".95"/>
<path d="M110.2 25.9 129.4 19.2 148.5 14.4 171 11.5 192.6 14.4 211.8 19.2 231 27.8 250.2 40.3 265.5 53.7 277 67.2 286.6 82.5 291.4 99.8 296.2 119 300 138.2 302.9 157.4 304.9 176.6 306.8 199.6 309.7 209.2 310.6 228.4 308.7 251.4 300 262 284.7 269.7 269.4 272.5 257.8 280.2 248.2 291.7 242.5 303.2 245.4 314.8 248.2 328.2 248.2 337.8 234.8 343.5 229 348.3 239.6 357 241.5 372.3 248.2 384.8" fill="none" stroke="#07121e" stroke-width="2.4" stroke-linejoin="round"/>
<path d="M248.2 384.8 248.2 393.2 240.8 403.8 232.4 410.1 245 416.5 248.2 431.2 253.5 433.3 254.5 454.5 240.8 462.9 232.4 471.4 247.1 473.5 254.5 484 258.8 500.9 257.7 513.6 242.9 527.3 251.4 532.6 256.6 538.9 258.8 560 259.7 575.4 260.7 590.7 268.4 590.7 279.9 602.2 289.5 613.7 302 627.2 302.9 642.5 303.9 667.5 305.8 682.8 307.7 694.4 306.7 713.6 301 725.1 283.7 730.8 245.3 738.5 206.9 745.2 183.9 749.1 149.4 750 111 749.1 72.6 745.2 61 740.4 45.7 728.9 32.3 719.3 24.6 709.7 23.6 694.4 25.6 675.2 27.5 656 29.4 636.8 32.3 616.6 45.2 609.6 77.4 601.5 80.1 592.1 80.8 578.7 77.4 570.6 65.3 559.9 51.9 549.1 47.2 543.7 46.5 530.3 49.9 524.9 59.9 519.6 62.6 514.9 72 512.8 78.7 516.9 92.2 522.2 91.5 505.1 93 488.2 105.7 477.7 102.5 462.9 100.4 441.8 104.6 424.9 118.3 415.4 113 405.9 111 394.5 95.1 395 86.7 384.8 80.4 374.3 76.6 362.7 73.7 349.3 68.9 335.9 62.2 328.2 50.7 325.3 38.2 316.7 28.6 305.2 21.9 289.8 19 266.8 18 245.7 14.2 239.9 12.7 228.4 12.3 209.2 11.3 190 10.4 176.6 11.3 153.6 16.1 130.5 25.7 103.6 37.2 84.5 52.6 65.3 71.8 48 91 35.5 110.2 25.9 129.4 19.2 148.5 14.4 171 11.5" fill="none" stroke="#ec9266" stroke-width="1.8" stroke-linejoin="round" opacity=".95"/>
</svg><div class="abs" style="left:1896px;top:168px;width:24px;height:851px;background:#535353"></div>
<div class="abs" style="left:1899px;top:173px;width:20px;height:20px;background:linear-gradient(#fafafc,#e6e7ec 55%,#dcdee4);border:1px solid #f4f4f6;border-radius:3px"></div>
<svg style="left:1899px;top:173px" width="20" height="20" viewBox="0 0 21 21"><path d="M4 5l4-2h10v12l-4 3H4z" fill="#fff" stroke="#111" stroke-width="1"/><path d="M4 5v13h3V3.500z" fill="#2a5fc0"/><path d="M8 3v12h10M8 15l-4 3M14 18V6H4M14 6l4-3" fill="none" stroke="#111" stroke-width="1"/><path d="M3 16l5-3v6z" fill="#111"/></svg>
<div class="abs" style="left:1899px;top:199px;width:20px;height:20px;background:linear-gradient(#fafafc,#e6e7ec 55%,#dcdee4);border:1px solid #f4f4f6;border-radius:3px"></div>
<svg style="left:1899px;top:199px" width="20" height="20" viewBox="0 0 21 21"><path d="M10.500 4.500a6.500 6.500 0 1 0 6.500 6.500h-3.500a3 3 0 1 1-3-3z" fill="#3f7fd8" stroke="#2c62b8" stroke-width=".6"/><path d="M10.500 2.500h6v2.500h-3.500v4h-2.500z" fill="#5a93e2" stroke="#2c62b8" stroke-width=".5"/></svg>
<div class="abs" style="left:1899px;top:225px;width:20px;height:20px;background:linear-gradient(#fafafc,#e6e7ec 55%,#dcdee4);border:1px solid #f4f4f6;border-radius:3px"></div>
<svg style="left:1899px;top:225px" width="20" height="20" viewBox="0 0 21 21"><rect x="3.500" y="3.500" width="14" height="14" fill="#2f6fd0" stroke="#0d1b4a" stroke-width="1.200"/><path d="M4 17L17 4H4z" fill="#58a6f0"/><path d="M2.500 16l5-3v6z" fill="#111"/></svg>
<div class="abs" style="left:1899px;top:251px;width:20px;height:20px;background:linear-gradient(#fafafc,#e6e7ec 55%,#dcdee4);border:1px solid #f4f4f6;border-radius:3px"></div>
<svg style="left:1899px;top:251px" width="20" height="20" viewBox="0 0 21 21"><circle cx="7" cy="6.500" r="3" fill="none" stroke="#6fb320" stroke-width="1.600"/><path d="M14.500 3l3.500 7h-7z" fill="#79c21f"/><path d="M4 13h14l-1.500 4.500h-12z" fill="#86cc22" stroke="#5a9a14" stroke-width=".6"/></svg>
<div class="abs" style="left:1899px;top:277px;width:20px;height:20px;background:linear-gradient(#fafafc,#e6e7ec 55%,#dcdee4);border:1px solid #f4f4f6;border-radius:3px"></div>
<svg style="left:1899px;top:277px" width="20" height="20" viewBox="0 0 21 21"><circle cx="9" cy="8.500" r="5.500" fill="#f4f6fa" stroke="#8a8e96" stroke-width="1.300"/><path d="M13 12.500l5 5" stroke="#555" stroke-width="2" stroke-linecap="round"/><path d="M6.500 7.500v-1.500h1.500M10 6h1.500v1.500M11.500 9.500v1.500H10M8 11H6.500V9.500" fill="none" stroke="#555" stroke-width=".9"/></svg>
<div class="abs" style="left:1899px;top:303px;width:20px;height:20px;background:linear-gradient(#f6a64e,#f09838);border:1px solid #fbd7a8;border-radius:3px"></div>
<svg style="left:1899px;top:303px" width="20" height="20" viewBox="0 0 21 21"><circle cx="10.500" cy="11" r="7" fill="#d22a1e"/><path d="M10.500 4a7 7 0 1 0 7 8" fill="none" stroke="#7a120c" stroke-width="1.600"/><path d="M9 8a4 4 0 1 0 5 5" fill="none" stroke="#f7d33a" stroke-width="1.600"/><path d="M15 3l1 3 3 .500-2.500 1.500.500 3-2.500-2-2.500 1.500 1-3-2-2h3z" fill="#fbe04a"/></svg>
<div class="abs" style="left:1899px;top:329px;width:20px;height:20px;background:linear-gradient(#fafafc,#e6e7ec 55%,#dcdee4);border:1px solid #f4f4f6;border-radius:3px"></div>
<svg style="left:1899px;top:329px" width="20" height="20" viewBox="0 0 21 21"><rect x="3.500" y="4.500" width="13" height="10" fill="none" stroke="#1d1d9a" stroke-width="1.500" stroke-dasharray="2.500 1.500"/><path d="M12 9l0 9 2.200-2 1.600 3.600 1.700-.800-1.600-3.500 3-.200z" fill="#111" stroke="#111" stroke-width=".4"/></svg>
<div class="abs" style="left:1899px;top:355px;width:20px;height:20px;background:linear-gradient(#fafafc,#e6e7ec 55%,#dcdee4);border:1px solid #f4f4f6;border-radius:3px"></div>
<svg style="left:1899px;top:355px" width="20" height="20" viewBox="0 0 21 21"><ellipse cx="10" cy="10" rx="7" ry="5" fill="none" stroke="#1d1d9a" stroke-width="1.500" stroke-dasharray="2.500 1.500"/><path d="M12 9l0 9 2.200-2 1.600 3.600 1.700-.800-1.600-3.500 3-.200z" fill="#111" stroke="#111" stroke-width=".4"/></svg>
<div class="abs" style="left:1899px;top:381px;width:20px;height:20px;background:linear-gradient(#fafafc,#e6e7ec 55%,#dcdee4);border:1px solid #f4f4f6;border-radius:3px"></div>
<svg style="left:1899px;top:381px" width="20" height="20" viewBox="0 0 21 21"><path d="M3 16L16.500 3.500" stroke="#3a3a9a" stroke-width="1.600"/><path d="M12 9l0 9 2.200-2 1.600 3.600 1.700-.800-1.600-3.500 3-.200z" fill="#111" stroke="#111" stroke-width=".4"/></svg>
<div class="abs" style="left:1899px;top:407px;width:20px;height:20px;background:linear-gradient(#fafafc,#e6e7ec 55%,#dcdee4);border:1px solid #f4f4f6;border-radius:3px"></div>
<svg style="left:1899px;top:407px" width="20" height="20" viewBox="0 0 21 21"><path d="M17 4L8 13" stroke="#c9a25a" stroke-width="1.600"/><path d="M3 16c1-3 4-4 6-3 0 2-3 4-6 3z" fill="#b0361c"/><path d="M12 9l0 9 2.200-2 1.600 3.600 1.700-.800-1.600-3.500 3-.200z" fill="#111" stroke="#111" stroke-width=".4"/></svg>
<div class="abs" style="left:1899px;top:433px;width:20px;height:20px;background:linear-gradient(#f6a64e,#f09838);border:1px solid #fbd7a8;border-radius:3px"></div>
<svg style="left:1899px;top:433px" width="20" height="20" viewBox="0 0 21 21"><path d="M5 13c-3-4 0-9 5-9s8 4 5 8c-3 3-7-1-4-3M8 12c1 2 0 5-3 6" fill="none" stroke="#3a2a10" stroke-width="1.400"/><path d="M12 9l0 9 2.200-2 1.600 3.600 1.700-.800-1.600-3.500 3-.200z" fill="#111" stroke="#111" stroke-width=".4"/></svg>
<div class="abs" style="left:1899px;top:459px;width:20px;height:20px;background:linear-gradient(#fafafc,#e6e7ec 55%,#dcdee4);border:1px solid #f4f4f6;border-radius:3px"></div>
<svg style="left:1899px;top:459px" width="20" height="20" viewBox="0 0 21 21"><path d="M3.500 5l12-1.500 2 11-11 3z" fill="none" stroke="#1d1d7a" stroke-width="1.500"/><g fill="#1d1d7a"><rect x="2.500" y="4" width="2" height="2"/><rect x="14.500" y="2.500" width="2" height="2"/><rect x="5.500" y="16.500" width="2" height="2"/></g><path d="M12 9l0 9 2.200-2 1.600 3.600 1.700-.800-1.600-3.500 3-.200z" fill="#111" stroke="#111" stroke-width=".4"/></svg>
<div class="abs" style="left:1899px;top:485px;width:20px;height:20px;background:#a3a3a3;border:1px solid #b4b4b4;border-radius:3px"></div>
<svg style="left:1899px;top:485px" width="20" height="20" viewBox="0 0 21 21"><path d="M2 3l9 1-3 9-6 3z" fill="#4f86c6" opacity=".8"/><path d="M8 13l5-9 5 10-5 4z" fill="#d8707a" opacity=".85"/><path d="M2 16l6-3 5 5H4z" fill="#6a9bd0" opacity=".7"/><path d="M12 9l0 9 2.200-2 1.600 3.600 1.700-.800-1.600-3.500 3-.200z" fill="#3a3a3a" stroke="#3a3a3a" stroke-width=".4"/></svg>
<div class="abs" style="left:1899px;top:511px;width:20px;height:20px;background:#a3a3a3;border:1px solid #b4b4b4;border-radius:3px"></div>
<svg style="left:1899px;top:511px" width="20" height="20" viewBox="0 0 21 21"><path d="M3.500 4.500l9 1.500-5 10z" fill="none" stroke="#3c3c5c" stroke-width="1"/><g fill="#2a2a4a"><rect x="2.500" y="3.500" width="2" height="2"/><rect x="11.500" y="5" width="2" height="2"/></g><path d="M12 9l0 9 2.200-2 1.600 3.600 1.700-.800-1.600-3.500 3-.200z" fill="#3a3a3a" stroke="#3a3a3a" stroke-width=".4"/></svg>
<div class="abs" style="left:1899px;top:537px;width:20px;height:20px;background:#c79868;border:1px solid #cfa880;border-radius:3px"></div>
<svg style="left:1899px;top:537px" width="20" height="20" viewBox="0 0 21 21"><path d="M4 5l13-1-3 5 2 1-6 9-5-9z" fill="#7d9fd0" opacity=".85"/><path d="M7 6l9-1-2 3-7 .500z" fill="#c9707c" opacity=".85"/><path d="M8 10l7 0-5 8z" fill="#b9c4dc" opacity=".8"/></svg>
<div class="abs" style="left:1899px;top:563px;width:20px;height:20px;background:#a3a3a3;border:1px solid #b4b4b4;border-radius:3px"></div>
<svg style="left:1899px;top:563px" width="20" height="20" viewBox="0 0 21 21"><path d="M6 4l11-1-2 4 2 1-6 10-4-9z" fill="#7d9fd0" opacity=".8"/><path d="M8 5l8-1-2 3-6 .500z" fill="#c9606c" opacity=".85"/><path d="M8 9l8 0-5 3z" fill="#5a7fc8" opacity=".85"/></svg>
<div class="abs" style="left:1899px;top:589px;width:20px;height:20px;background:linear-gradient(#f6a64e,#f09838);border:1px solid #fbd7a8;border-radius:3px"></div>
<svg style="left:1899px;top:589px" width="20" height="20" viewBox="0 0 21 21"><circle cx="10.500" cy="10.500" r="8" fill="#2e62c4"/><path d="M3 8a8 8 0 0 1 13-3.500l-4 4-9 2z" fill="#f5c33a"/><path d="M3 11l9-3 6 2-2 4-12 0z" fill="#e03a2a"/><path d="M5 16a8 8 0 0 0 11 0l-5-2z" fill="#3a6fd0"/><path d="M14.500 10.500v6M11.500 13.500h6" stroke="#fff" stroke-width="1.700"/></svg>
<div class="abs" style="left:1899px;top:615px;width:20px;height:20px;background:#a3a3a3;border:1px solid #b4b4b4;border-radius:3px"></div>
<svg style="left:1899px;top:615px" width="20" height="20" viewBox="0 0 21 21"><path d="M9 6l9-2 0 8-9 7-6-3z" fill="#c9606c" opacity=".85"/><path d="M3 16l6-10 3 2-4 10z" fill="#4f7fc6" opacity=".85"/><path d="M8 18l10-6v5l-8 2z" fill="#3a6ab8" opacity=".85"/><path d="M3 3l4 3M7 6l-2.500-.300M7 6l-.800-2.300" stroke="#333" stroke-width=".8" fill="none"/></svg>
<svg style="left:1796px;top:908px" width="80" height="72" viewBox="0 0 80 72">
<path d="M11.200 45.600L17.700 34.300H43.600L44.500 36V61L40 63.700L28 65.900L37.600 57.700L38.400 47.300L29.800 37H18.600z" fill="#a4a4a4"/>
<path d="M17.700 34.300H43.600L44.500 36 29.800 37H18.600L11.200 45.600z" fill="#8f8f8f"/>
<path d="M29.400 15.800L33.600 30L32 30L32.600 35L26.200 35L26.800 30L25.200 30z" fill="#6a6edc"/>
<ellipse cx="22" cy="52.500" rx="7" ry="4.300" fill="#cd4a48" transform="rotate(-20 22 52.500)"/>
<path d="M15 62L19.400 64.600" stroke="#555" stroke-width=".8"/>
<path d="M40.600 47.500L50 48.300V46.500L60.900 50.700L50 54.500V53L40.600 54z" fill="#58d058"/>
<text x="24.300" y="13.600" font-family="Liberation Sans" font-weight="bold" font-size="12.500" fill="#1a1a9a">Z</text>
<text x="8.600" y="61" font-family="Liberation Sans" font-weight="bold" font-size="12" fill="#d01010">X</text>
<text x="61.800" y="55.500" font-family="Liberation Sans" font-weight="bold" font-size="12.500" fill="#12a012">Y</text></svg>
</body>
</html>
